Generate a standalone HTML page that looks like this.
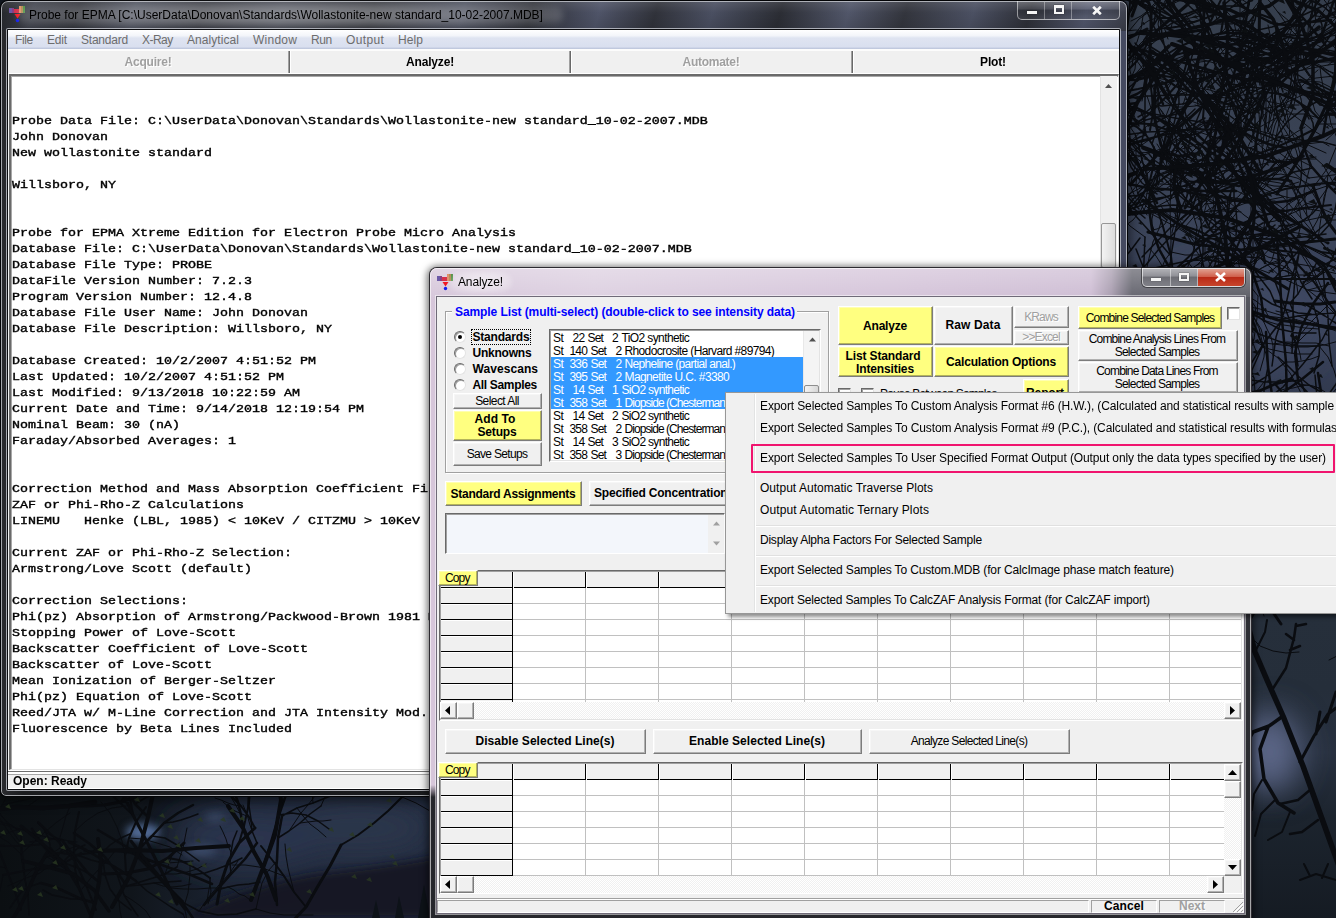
<!DOCTYPE html>
<html><head><meta charset="utf-8"><title>Probe for EPMA</title>
<style>
*{box-sizing:border-box;margin:0;padding:0}
html,body{width:1336px;height:918px;overflow:hidden}
body{position:relative;background:#141a24;font-family:"Liberation Sans",sans-serif;font-size:12px;color:#000}
.abs{position:absolute}
#bg{position:absolute;left:0;top:0}
.t{position:absolute;white-space:pre;line-height:1}
.seg{font-size:12px;line-height:14px}
.ms{font-size:12px;line-height:13px;margin-top:1px}
.msb{font-size:12px;line-height:13px;font-weight:bold;margin-top:1px}
.bb{font-size:12px;line-height:14px;font-weight:bold}
.mono{font-family:"Liberation Mono",monospace;font-weight:normal;-webkit-text-stroke:.45px #000;font-size:13.333px;line-height:18.182px;color:#000;white-space:pre;transform:scaleY(.88);transform-origin:0 0}
#main{position:absolute;left:1px;top:1px;width:1126px;height:795px;border-radius:7px 7px 5px 5px;background:linear-gradient(90deg,#2a2b2f 0,#1a1b1e 2%,#17181b 98.500%,#454a60 99.400%);box-shadow:0 0 0 1px #020305,0 2px 12px 3px rgba(0,0,0,.55);overflow:hidden}
#main .glass{position:absolute;left:0;top:0;width:100%;height:30px;background:linear-gradient(rgba(255,255,255,.10),rgba(255,255,255,0) 40%,rgba(0,0,0,.10)),linear-gradient(105deg,#232529 0,#3c3f49 3%,#2a2c33 7%,#454956 12%,#2c2e36 18%,#3e414c 25%,#2a2c33 33%,#444857 41%,#2c2e35 47%,#4f5468 53%,#30323a 58%,#4a4f61 63%,#2b2d34 69%,#515669 75%,#33353d 80%,#4b5062 86%,#2d2f37 91%,#50556a 96%,#3a3d48 100%)}
#main .edge{position:absolute;left:0;top:0;right:0;bottom:0;border:1px solid rgba(205,208,214,.75);border-radius:7px 7px 5px 5px}
.capbtns{border:1px solid rgba(255,255,255,.5);border-top:none;border-radius:0 0 5px 5px;background:linear-gradient(rgba(255,255,255,.22),rgba(255,255,255,.08) 45%,rgba(0,0,0,.12) 50%,rgba(255,255,255,.06))}
#dlg{position:absolute;left:430px;top:268px;width:821px;height:660px;border-radius:7px 7px 0 0;box-shadow:0 0 0 1px #2c2a30,0 1px 7px 3px rgba(0,0,0,.55);overflow:hidden;
 background:linear-gradient(rgba(40,40,46,0) 0,rgba(40,40,46,0) 517px,#26272c 529px),linear-gradient(90deg,#d6c6da 0,#dccfe0 20%,#d3c2d8 60%,#cdbcd3 80.500%,#a79bae 83%,#62626c 85.500%,#5a5b64 100%)}
#dlg .dglass{position:absolute;left:0;top:0;width:100%;height:29px;background:linear-gradient(rgba(255,255,255,.28),rgba(255,255,255,.04))}
#dlg .dedge{position:absolute;left:0;top:0;right:0;bottom:-4px;border:1px solid rgba(255,255,255,.6);border-radius:7px 7px 0 0}
#dlg .dright{position:absolute;right:0;top:29px;width:8px;height:640px;background:linear-gradient(#55565f 0,#3a3b42 80px,#2e2f35 300px,#232428 600px)}
.dcap{border:1px solid rgba(255,255,255,.6);border-top:none;border-radius:0 0 5px 5px;background:linear-gradient(rgba(255,255,255,.35),rgba(255,255,255,.12) 45%,rgba(0,0,0,.15) 50%,rgba(255,255,255,.08));box-shadow:0 0 0 1px rgba(0,0,0,.45)}
.dclose{border-radius:0 0 4px 0;background:linear-gradient(#e0a090 0,#d0604c 45%,#b82a16 50%,#c8452c 100%)}
.radio{width:12px;height:12px;border-radius:6px;background:#fff;border:1px solid;border-color:#696969 #e3e3e3 #e3e3e3 #696969;box-shadow:inset 1px 1px 0 #a0a0a0}
</style></head>
<body>
<svg id="bg" width="1336" height="918" viewBox="0 0 1336 918"><defs><linearGradient id="gr" x1="0" y1="0" x2="0" y2="1"><stop offset="0" stop-color="#353e4c"/><stop offset=".15" stop-color="#394254"/><stop offset=".33" stop-color="#3c455d"/><stop offset=".46" stop-color="#30384c"/><stop offset=".58" stop-color="#2a3244"/><stop offset=".67" stop-color="#262f3b"/><stop offset=".75" stop-color="#252e3a"/><stop offset=".82" stop-color="#283140"/><stop offset=".89" stop-color="#1c242e"/><stop offset="1" stop-color="#151b23"/></linearGradient><linearGradient id="gb" x1="0" y1="0" x2="1" y2="0"><stop offset="0" stop-color="#0b0f12"/><stop offset=".3" stop-color="#10151b"/><stop offset=".5" stop-color="#1b2331"/><stop offset=".75" stop-color="#222b3e"/><stop offset="1" stop-color="#232c40"/></linearGradient><filter id="bl" x="-50%" y="-50%" width="200%" height="200%"><feGaussianBlur stdDeviation="16"/></filter><filter id="bs" x="-50%" y="-50%" width="200%" height="200%"><feGaussianBlur stdDeviation="4"/></filter></defs><rect width="1336" height="918" fill="#141a24"/><rect x="1100" y="0" width="236" height="918" fill="url(#gr)"/><rect x="0" y="790" width="440" height="128" fill="url(#gb)"/><g filter="url(#bl)"><ellipse cx="1270" cy="752" rx="30" ry="40" fill="#5f6a8c" opacity=".95"/><ellipse cx="1235" cy="320" rx="95" ry="60" fill="#3f4865" opacity=".7"/><ellipse cx="250" cy="838" rx="80" ry="30" fill="#2b3650" opacity=".95"/><ellipse cx="360" cy="828" rx="75" ry="26" fill="#2c364e" opacity=".9"/></g><g filter="url(#bs)"><ellipse cx="143" cy="832" rx="17" ry="8" fill="#5f7cae" opacity=".85"/><ellipse cx="200" cy="851" rx="16" ry="5" fill="#4e6288" opacity=".6"/><ellipse cx="215" cy="817" rx="10" ry="4" fill="#4e6288" opacity=".5"/></g><path d="M180 918Q260 880 330 872T440 856L440 918z" fill="#121821" opacity=".9" filter="url(#bs)"/><path d="M418 918l6 -34l6 34zM395 918l4 -22l5 22zM372 918l4 -18l4 18z" fill="#0d1218"/><path d="M1320 67l8 4l9 3l10 1l9 1M1320 67l1 9l2 10l3 9l3 9M1326 104l3 10l2 10l4 9l4 10M1294 72l9 -2l7 -4l7 -6l5 -7M1265 97l11 17l14 16l16 14l20 9M1306 144l17 -2l16 4l14 8l13 10M1276 114l5 16l6 16l7 14l11 13M1290 130l7 13l4 14l1 14l-2 14M1259 128l-26 6l-25 7l-26 8l-25 6M1233 134l-11 12l-13 11l-16 7l-15 7M1233 134l-20 4l-17 10l-15 15l-10 18M1208 141l0 19l3 18l5 17l10 16M1265 97l-19 8l-21 2l-20 -1l-20 -7M1246 105l-12 4l-13 1l-13 -1l-13 -4M1225 107l-6 16l-4 16l-1 17l2 17M1219 183l13 -25l10 -27l9 -28l6 -28M1242 131l-7 -17l-7 -17l-7 -17l-7 -17M1228 97l-9 -4l-9 -3l-10 -2l-10 -1M1235 114l5 -9l7 -6l8 -5l9 -2M1214 63l-10 -3l-10 0l-10 0l-11 1M1257 75l15 -18l13 -21l13 -19l10 -22M1298 17l-10 -18l-8 -18l-3 -20l-1 -20M1308 -5l-5 -15l-9 -12l-13 -9l-14 -4M1250 -128l19 -7l21 -3l20 -4l20 -3M1250 -128l14 -8l14 -8l13 -9l14 -8M1314 -112l0 -21l1 -21l6 -20l10 -19M1301 -89l14 2l14 3l14 3l14 3M1193 -20l4 -16l7 -14l7 -16l6 -15M1193 -20l-12 -16l-8 -18l-6 -18l-3 -20M1250 148l9 -4l10 -3l9 -3l10 -3M1250 148l4 13l6 13l7 11l11 9M1200 150l-9 16l-12 14l-15 10l-18 4M1208 171l2 13l3 12l1 13l1 13M1208 171l0 12l-1 11l-1 12l-3 11M1203 7l-8 -16l-11 -14l-14 -13l-15 -9M1170 -36l-11 -1l-11 -2l-11 -5l-10 -5M1184 -23l-9 -8l-10 -7l-10 -6l-11 -5M1155 -45l-2 -12l-1 -13l0 -12l0 -13M1203 7l-12 -13l-15 -12l-14 -11l-16 -7M1191 -6l-10 6l-11 5l-10 5l-11 6M1176 -18l-8 13l-7 14l-3 15l3 15M1279 121l6 9l6 10l5 10l3 11M1275 104l13 7l12 9l11 9l13 8M1277 69l-4 8l-3 9l-3 8l-4 8M1223 59l-8 0l-7 2l-8 1l-7 3M1209 40l-7 -6l-6 -6l-5 -6l-5 -7M1223 59l-6 0l-6 0l-6 -1l-6 -1M1144 -64l-9 -8l-10 -5l-12 -2l-12 2M1144 -64l-9 -10l-11 -9l-10 -9l-13 -5M1150 -150l-13 -8l-15 -5l-16 -1l-15 4M1150 -150l-11 -6l-9 -8l-6 -12l-1 -12M1156 -128l8 -13l11 -11l13 -9l13 -8M1216 123l-4 -13l-5 -12l-5 -12l-3 -13M1207 98l-7 -1l-8 -2l-7 -1l-7 -1M1202 86l0 -7l-2 -7l-3 -6l-5 -6M1208 135l8 -5l6 -8l4 -9l3 -10M1216 130l1 -7l1 -6l1 -6l1 -7M1226 113l-4 -4l-5 -2l-6 -1l-6 0M1229 103l9 -2l8 -2l8 -1l8 0M1296 46l24 -11l24 -12l22 -13l24 -11M1320 35l11 9l10 10l10 10l9 11M1366 10l20 8l21 1l21 -2l20 -9M1281 75l16 -4l15 -3l16 -3l16 -2M1297 71l1 -8l1 -9l-3 -8l-5 -6M1328 65l7 -5l7 -4l8 -3l8 -2M1296 46l11 -11l9 -13l10 -14l6 -15M1316 22l-2 -13l-4 -11l-5 -12l-6 -11M1307 35l12 -5l12 -7l9 -9l6 -12M1095 209l-9 -3l-9 -1l-9 0l-9 0M1131 196l-7 -3l-8 -2l-7 1l-7 4M1119 200l-5 7l-6 7l-6 6l-7 5M1145 166l2 6l1 7l0 6l-1 7M1124 184l2 7l4 5l5 6l6 3M1167 220l-2 4l-4 3l-4 2l-5 1M1154 208l-1 6l-1 5l0 5l2 6M1271 48l1 17l-2 17l-4 16l-8 14M1270 82l2 10l1 11l-1 10l-3 11M1266 98l0 12l-1 12l-1 12l-1 12M1216 37l9 20l10 20l10 19l9 20M1245 96l13 3l13 3l14 3l14 0M1235 77l-2 14l-2 14l-3 14l-2 14M1216 37l18 -1l19 3l18 3l19 2M1234 36l6 -9l7 -10l7 -9l7 -9M1290 44l14 -3l14 -1l13 2l14 4M1176 -49l-5 -10l-6 -10l-6 -10l-4 -11M1165 -35l15 0l13 -3l14 -4l13 -5M1176 -49l10 5l9 8l7 8l4 11M1104 -110l-14 -1l-12 -5l-13 -6l-11 -7M1130 -84l-13 -5l-12 -4l-12 -5l-12 -6M1104 -110l-13 -1l-13 -2l-13 -2l-13 -1M1190 204l18 -11l19 -8l21 -5l21 1M1248 180l13 8l14 6l15 4l15 -1M1227 185l18 -3l17 -2l18 3l16 7M1190 204l7 23l-3 24l-9 23l-11 22M1185 274l-11 13l-11 15l-7 16l-4 17M1185 274l8 11l9 9l10 8l11 7M1287 122l6 -13l3 -13l1 -14l-4 -13M1296 96l-8 -5l-8 -4l-10 -1l-9 0M1296 96l-7 -8l-9 -7l-10 -5l-10 -4M1296 96l-7 -6l-6 -6l-8 -6l-7 -6M1276 137l3 -14l5 -14l6 -13l7 -13M1290 96l8 -6l7 -7l6 -7l7 -6M1297 83l11 -2l12 1l10 5l8 8M1276 137l10 2l10 2l11 0l10 0M1286 139l5 -3l4 -3l5 -3l5 -3M1307 141l5 -1l6 1l6 2l5 3M1248 129l-6 11l-5 12l-3 13l-2 13M1237 152l3 7l5 5l5 5l6 4M1232 178l-9 6l-10 5l-11 3l-10 4M1211 128l-9 4l-10 3l-10 0l-10 -2M1182 135l-5 -6l-5 -6l-6 -6l-5 -7M1202 132l-7 5l-7 5l-6 5l-6 6M1192 135l-5 -6l-3 -7l-2 -8l1 -7M1023 82l-8 -5l-7 -7l-6 -7l-5 -8M1073 70l-9 7l-10 6l-10 4l-11 3M1056 74l-5 12l-3 14l0 13l4 13M1142 59l2 10l1 11l-1 10l-2 11M1134 50l2 9l-1 10l-4 9l-5 8M1163 72l2 6l2 7l1 7l0 7M1255 20l-9 2l-9 1l-9 0l-9 -2M1237 23l-5 1l-5 0l-5 0l-6 0M1237 23l-4 -4l-4 -5l-4 -4l-5 -3M1249 35l-7 2l-8 3l-7 4l-6 4M1227 44l-1 4l-3 3l-3 3l-4 2M1221 48l-5 -4l-4 -4l-5 -4l-4 -4M1171 56l-13 -2l-13 0l-13 0l-13 0M1158 54l-7 4l-6 5l-6 7l-5 6M1119 54l-9 -4l-9 -1l-10 2l-8 4M1157 62l-7 7l-9 6l-9 3l-10 0M1132 78l-2 -7l-1 -7l1 -8l1 -7M1132 78l-7 -1l-7 -1l-8 1l-6 3M1166 -6l-7 8l-9 7l-9 7l-10 5M1123 -7l-6 5l-7 4l-7 3l-8 1M1166 -6l-4 -7l-2 -8l0 -8l1 -7M1109 -11l-2 10l-2 11l-2 10l-2 11M1109 -11l-5 -10l-6 -10l-4 -10l-3 -11M1149 -29l11 2l11 4l9 5l7 9M1151 -57l-3 -10l0 -10l0 -10l1 -10M1242 132l11 8l11 9l11 10l9 11M1194 164l11 2l11 6l9 7l7 9M1194 164l13 -1l13 3l12 6l10 9M1169 127l15 3l15 2l15 5l15 4M1169 127l-3 10l0 10l0 10l1 10M1237 254l2 11l2 11l4 10l7 9M1210 229l10 1l11 1l11 1l10 1M1202 212l9 -1l10 0l10 0l10 1M1152 7l-18 -7l-17 -9l-17 -10l-18 -8M1117 -9l0 -15l3 -14l5 -14l8 -12M1117 -9l0 -12l4 -12l6 -10l8 -9M1076 2l-14 -8l-14 -7l-16 -4l-16 0M1062 -6l-6 11l-8 10l-9 8l-10 8M1048 -13l-9 -8l-11 -6l-12 -2l-12 0M1152 7l-13 -11l-11 -14l-13 -11l-13 -11M1115 -29l-10 0l-10 -2l-10 -3l-9 -5M1115 -29l-14 0l-14 -6l-10 -10l-8 -12M1115 -29l0 -9l-3 -8l-2 -8l-5 -8M1297 138l-7 15l-7 14l-11 11l-12 11M1279 146l-10 -14l-7 -15l-2 -17l4 -16M1216 119l-12 4l-10 6l-10 7l-11 6M1273 162l-1 -13l0 -12l3 -12l5 -12M1305 92l-15 -13l-11 -16l-7 -19l-4 -19M1305 92l-19 -6l-19 -6l-19 -1l-20 0M1240 52l8 -18l6 -18l8 -18l6 -18M1373 165l4 21l7 21l11 18l13 17M1408 242l-1 11l-1 11l-2 11l-2 11M1384 207l-7 12l-6 13l-4 13l-5 13M1395 225l12 5l13 5l12 5l12 3M1373 165l-2 26l-3 26l-5 26l-8 25M1363 243l-13 11l-13 11l-15 9l-15 8M1363 243l7 19l3 20l0 20l-3 20M1174 170l2 9l4 9l4 8l5 7M1160 175l-1 8l-3 8l-5 7l-6 6M1138 193l3 7l5 6l5 5l7 4M1188 184l-6 -3l-5 -3l-5 -3l-5 -3M1196 181l-5 3l-5 2l-6 1l-5 -1M1188 184l-2 4l-3 4l-4 2l-4 2M1177 177l-5 -8l-5 -8l-5 -9l-5 -8M1177 177l-8 4l-8 5l-7 5l-6 7M1177 177l-6 -6l-6 -6l-4 -7l-5 -7M1487 24l-7 -21l-9 -19l-16 -15l-18 -10M1466 46l-5 -19l0 -19l3 -19l5 -18M1534 -16l22 9l19 14l15 18l12 20M1475 72l2 14l1 14l0 14l1 14M1475 72l6 17l4 19l-1 18l-4 18M1343 79l18 -6l17 -7l13 -13l12 -15M1351 101l16 10l14 13l11 15l6 18M1343 79l7 16l8 14l9 14l8 14M1308 -16l6 -3l6 -3l5 -5l5 -5M1318 -14l6 0l5 1l5 1l5 2M1318 -14l5 -7l2 -8l0 -9l-2 -8M1248 -36l-7 -6l-7 -6l-6 -7l-5 -7M1271 -29l-5 -7l-8 -6l-8 -3l-9 0M1274 -48l-6 -2l-6 -3l-4 -4l-4 -6M1243 -57l-7 1l-7 -1l-6 0l-7 -1M1196 -16l-14 6l-15 6l-13 8l-11 12M1143 16l-2 13l-4 13l-7 12l-9 9M1182 -10l-11 2l-11 1l-10 2l-11 2M1196 -16l-21 2l-21 -4l-20 -8l-17 -12M1134 -26l-9 8l-7 10l-7 10l-5 12M1154 -18l-12 -4l-12 -1l-12 1l-12 1M1154 -18l-4 -14l-5 -13l-5 -13l-6 -13M1170 -31l2 -18l3 -17l2 -18l4 -17M1177 -84l-7 -10l-10 -9l-11 -7l-13 -2M1172 -49l9 -3l8 -5l6 -6l4 -9M1150 31l0 8l0 7l1 8l2 7M1144 40l-5 5l-4 7l-2 7l-1 7M1144 40l-1 6l0 6l0 5l0 6M1175 16l-2 4l-1 4l-1 4l-2 3M1175 16l4 0l4 1l4 2l3 2M1111 103l-11 -18l-8 -19l-7 -20l-7 -21M1100 85l-10 -4l-9 -6l-7 -9l-5 -9M1100 85l-16 -7l-18 -2l-17 1l-18 4M1092 66l-10 -8l-10 -9l-8 -10l-6 -11M1207 123l-20 13l-21 11l-22 8l-23 7M1144 155l-14 -7l-14 -5l-16 -1l-15 0M1144 155l-19 1l-18 3l-16 9l-12 14M1144 155l-7 15l-1 15l3 16l8 14M1341 95l21 2l21 6l19 10l15 16M1402 113l3 16l-1 16l-4 15l-3 16M1362 97l17 -1l17 1l17 2l16 8M1417 129l14 6l14 8l14 6l13 8M1319 124l26 0l25 -4l26 -2l26 -5M1345 124l14 10l9 14l5 16l0 17M1370 120l10 -19l7 -19l3 -21l-3 -21M1118 -62l9 -22l13 -21l16 -19l18 -16M1156 -124l-5 -12l-5 -12l-3 -12l-5 -12M1174 -140l12 9l9 11l7 14l2 14M1118 -62l-3 -27l-10 -26l-12 -25l-17 -22M1093 -140l7 -17l10 -16l12 -14l11 -15M1115 -89l-19 -10l-19 -11l-20 -9l-20 -6M1128 -30l-13 -17l-11 -18l-7 -21l-1 -21M1115 -47l13 -9l11 -12l6 -15l5 -15M1097 -86l9 -12l5 -15l5 -14l1 -16M1316 -7l8 0l7 3l5 5l5 6M1316 -7l3 -9l4 -9l6 -9l6 -8M1292 49l7 -1l8 -2l7 -2l7 -2M1292 49l4 7l3 7l5 6l5 7M1327 16l9 -2l8 -3l9 -4l8 -3M1327 16l8 2l9 1l8 -1l9 -1M1355 -2l-1 -9l-1 -10l-2 -9l-2 -9M1247 79l-9 7l-9 5l-9 7l-8 8M1287 62l-7 10l-8 7l-9 8l-10 5M1313 104l2 7l5 6l5 6l6 4M1298 80l9 0l9 -2l9 -1l10 -1M1193 53l-7 5l-7 6l-4 7l-2 8M1186 58l-4 4l-3 4l-5 4l-4 3M1175 71l-1 5l-2 6l-3 5l-3 4M1188 69l7 10l8 9l8 8l11 6M1203 88l1 7l3 7l4 6l5 6M1211 96l5 5l6 3l6 0l7 -1M1195 79l7 -1l8 -1l8 -1l8 0M1368 -20l2 8l3 7l5 6l5 6M1347 -24l1 6l0 6l-1 6l-2 5M1340 -65l8 -1l8 -1l8 0l8 0M1336 -50l11 1l10 3l9 6l9 7M1336 -50l8 -1l8 1l8 3l6 4M1306 -44l-5 8l-5 8l-7 7l-6 7M1294 -43l-3 8l-2 8l-3 8l-4 7M1165 17l-9 1l-8 3l-7 5l-5 7M1153 10l-7 4l-7 5l-5 6l-5 6M1137 61l5 7l7 7l8 4l8 4M1129 69l-7 3l-6 5l-5 5l-5 5M1143 52l3 7l4 6l2 7l3 6M1190 -82l-8 9l-6 11l-6 11l-4 12M1190 -82l-12 6l-13 1l-14 -1l-12 -6M1194 -8l-9 -10l-8 -12l-5 -13l-4 -13M1215 -15l-18 -2l-18 -4l-17 -4l-17 -6M1253 49l-2 17l-3 17l0 17l3 17M1277 31l-3 25l2 24l5 24l7 24M1101 -55l-13 11l-13 11l-12 11l-11 13M1143 -49l-5 10l-1 12l0 12l2 11M1143 -49l-17 -4l-17 -4l-17 -2l-18 0M1158 -112l14 -12l13 -13l12 -14l10 -16M1150 -91l14 4l13 4l14 4l14 3M1148 -69l15 -9l14 -10l15 -9l15 -10M1299 33l-10 2l-11 1l-11 -1l-11 -1M1292 46l-8 7l-8 8l-7 8l-7 8M1299 33l1 10l-1 11l-3 11l-2 10M1293 38l-7 7l-8 3l-9 2l-9 -2M1308 39l0 -9l1 -9l3 -9l5 -8M1307 -54l-5 -2l-5 -2l-5 -3l-5 -1M1305 -45l-4 -6l-4 -6l-3 -6l-2 -7M1314 -3l-1 4l-1 5l0 5l0 5M1299 9l-2 7l-1 7l1 7l1 8M1299 9l-6 -4l-5 -6l-4 -6l-1 -7M1316 16l8 1l8 -2l6 -4l5 -7M1317 -3l-2 8l-2 7l-2 7l-1 7M1315 7l-4 7l-1 7l0 8l2 8M1203 118l1 6l3 6l3 5l5 5M1220 151l5 4l5 6l4 6l1 7M1184 144l1 6l-1 6l-2 6l-2 5M1180 136l6 0l6 -1l5 -1l5 -3M1180 136l6 0l5 -1l5 -1l5 -2M1176 74l-7 -3l-7 -3l-6 -6l-4 -6M1188 91l-8 4l-7 6l-4 7l-3 8M1026 145l0 -7l-2 -7l-1 -7l-3 -7M1015 139l2 -8l1 -8l0 -9l-1 -8M1015 139l-11 1l-11 0l-11 -1l-10 -1M983 132l-11 6l-12 5l-13 1l-13 -1M1002 130l-13 9l-15 5l-15 4l-16 -2M1336 114l22 8l24 3l24 1l24 -1M1406 126l12 4l12 3l12 0l13 -3M1358 122l11 -10l13 -7l12 -7l15 -4M1430 125l15 -1l16 2l13 8l11 12M1408 194l21 8l21 11l16 16l14 18M1450 213l5 17l6 16l11 14l11 14M1480 247l4 18l8 18l7 17l8 17M1255 128l-5 -2l-5 -3l-5 -3l-4 -4M1255 128l-5 -1l-5 -3l-4 -4l-2 -5M1290 156l7 3l6 3l6 3l5 5M1301 172l0 8l-2 8l-3 8l-6 6M1309 178l8 -1l8 -1l8 -1l8 -1M1116 10l-8 -6l-9 -6l-10 -4l-9 -6M1090 9l-8 -6l-10 -5l-9 -5l-10 -5M1090 9l-6 -3l-5 -4l-6 -5l-4 -5M1145 -15l-2 -8l-3 -8l-2 -8l-2 -9M1145 -15l10 -1l8 -5l9 -5l7 -6M1137 0l11 7l9 9l7 11l4 12M1143 -70l-3 -13l0 -13l2 -13l5 -13M1139 -39l6 -11l4 -13l-1 -12l-3 -13M1041 198l-1 14l4 13l6 12l10 9M1041 198l-15 -4l-15 -6l-13 -9l-11 -12M1177 174l1 15l-1 15l-2 15l-3 14M1139 153l15 -1l16 1l14 5l14 5M1149 184l-3 14l-5 12l-8 10l-11 8M1120 142l13 13l13 11l16 9l16 8M1149 184l13 0l13 1l13 2l13 2M1241 27l-1 -7l0 -8l0 -7l1 -7M1249 4l-8 -5l-7 -5l-9 -4l-9 -3M1241 27l-5 -6l-7 -4l-8 -2l-8 0M1218 52l-6 -2l-5 -1l-5 -3l-5 -3M1205 67l-7 2l-7 3l-6 3l-7 3M1205 67l-1 8l-1 8l-5 7l-5 6M1207 219l16 -10l16 -13l12 -15l7 -18M1251 181l-9 -12l-10 -11l-11 -9l-13 -7M1251 181l15 -5l15 -2l16 4l14 7M1234 241l19 -4l19 -4l19 -1l18 3M1309 235l8 -14l6 -14l3 -16l2 -16M1253 237l0 11l-2 12l-4 11l-5 9M1272 233l8 -7l7 -8l7 -9l6 -10M1234 241l-3 24l-2 24l0 24l-2 24M1231 265l11 14l8 16l3 18l0 18M1229 313l-8 10l-8 11l-9 10l-8 10M1229 289l-14 10l-13 11l-15 9l-13 11M952 -60l5 -18l7 -18l9 -17l13 -13M1009 -8l0 -18l-1 -18l-2 -18l-5 -17M991 -26l-8 -18l-5 -20l-2 -21l-2 -20M1042 71l-10 16l-7 18l-3 20l-3 19M1035 97l19 12l16 15l16 16l14 17M1037 124l-18 13l-11 19l-5 21l-2 22M1312 1l-7 -6l-9 -6l-9 -5l-10 -3M1334 16l-4 -8l-5 -7l-6 -6l-7 -5M1343 25l-7 -8l-8 -7l-9 -7l-8 -6M1386 17l7 4l7 6l5 7l2 9M1422 -9l7 -8l5 -8l3 -10l1 -10M1413 3l13 0l12 0l12 2l12 5M1173 -60l11 2l11 -3l10 -5l10 -6M1200 -72l9 4l8 4l9 4l10 2M1224 -45l6 9l4 9l4 10l5 10M1168 -43l8 10l8 10l4 12l3 13M1224 -45l11 -9l12 -8l12 -8l14 -4M1122 146l-11 -21l-5 -22l3 -24l6 -22M1109 79l-6 -11l-7 -10l-8 -9l-10 -7M1109 79l-9 -9l-11 -7l-12 -5l-12 -5M1109 79l14 -12l15 -10l14 -13l14 -12M1149 140l-13 9l-10 12l-8 13l-7 15M1126 161l1 10l2 9l3 10l4 9M1136 149l0 8l-1 9l-2 8l-2 8M1272 95l-5 17l-2 18l3 17l9 15M1268 147l9 4l8 6l8 6l7 7M1267 112l-10 11l-11 8l-13 5l-14 3M1287 56l4 10l3 11l4 11l3 11M1298 88l-5 8l-3 9l-4 9l-3 9M1301 99l1 6l2 6l4 4l5 4M1272 95l-14 12l-10 14l-7 17l-3 18M1248 121l4 9l3 9l0 10l-1 9M1238 156l-13 4l-14 0l-14 0l-14 -4M1258 107l-12 5l-11 7l-9 10l-4 12M1163 -30l5 10l3 12l3 11l3 11M1146 -31l9 5l8 5l10 3l9 3M1146 -31l8 -4l7 -4l6 -5l6 -6M1133 -97l-1 -8l-2 -7l-2 -7l-3 -7M1126 -88l8 -5l6 -6l6 -7l3 -9M1121 -78l-1 -6l0 -7l0 -7l1 -7M1134 -69l6 -2l5 -4l5 -4l2 -6M1126 -63l8 2l7 2l8 2l7 1M1126 -63l0 -8l1 -7l1 -8l2 -7M1157 78l10 2l8 5l8 7l5 9M1184 121l-2 9l-2 10l-3 10l-3 9M1173 107l11 0l11 -1l10 -2l11 -3M1152 96l5 8l5 8l4 9l4 9M1150 80l3 8l6 8l7 6l8 5M1108 106l8 14l7 14l8 14l6 15M1122 67l4 14l2 16l4 14l6 14M1225 79l7 5l8 3l8 3l9 1M1220 59l-4 5l-2 6l-1 6l1 6M1256 56l10 -9l10 -9l10 -10l9 -10M1272 62l7 -8l6 -7l4 -9l3 -10M1256 56l5 9l2 10l1 10l-1 11M1147 96l5 15l5 16l6 14l8 15M1163 141l5 10l6 9l9 7l9 6M1171 156l3 9l6 8l7 6l8 6M1203 95l23 3l22 -4l22 -10l19 -12M1226 98l5 -14l10 -12l12 -10l13 -8M1270 84l10 11l6 14l3 15l1 15M1155 62l-16 -3l-16 -6l-15 -8l-11 -12M1139 59l-14 0l-14 -1l-14 -4l-13 -3M1097 33l-13 2l-14 1l-13 2l-13 1M1108 45l3 -9l5 -8l6 -7l7 -6M1201 37l-2 17l-5 16l-8 15l-11 13M1194 70l-11 5l-10 6l-10 8l-8 9M1199 54l-4 13l-3 13l-5 12l-4 13M1199 54l-13 1l-13 5l-11 7l-10 9M1201 37l1 14l3 13l4 13l6 13M1202 51l8 3l9 0l9 -1l8 -3M1205 64l1 9l2 8l3 9l5 7M1205 64l-4 10l-3 11l-1 10l1 11M1332 91l17 5l14 10l10 13l8 15M1373 119l10 5l9 6l9 6l9 7M1373 119l-5 8l-4 8l-4 8l-6 8M1332 91l11 7l9 9l6 11l5 12M1352 107l-5 10l-6 8l-7 8l-8 7M1358 118l-1 11l1 10l2 11l4 9M1086 189l-12 5l-10 7l-8 10l-6 10M1086 189l6 9l4 10l5 9l6 10M1103 141l-9 13l-4 15l1 15l2 15M1125 135l-12 -15l-10 -16l-12 -14l-14 -13M1093 155l-12 5l-13 5l-13 4l-13 3M1061 150l0 -9l3 -8l4 -8l5 -6M1061 150l-10 8l-10 6l-12 6l-12 2M1350 17l20 -4l20 -4l21 -2l21 0M1370 13l9 6l9 5l10 4l10 2M1370 13l4 11l3 12l2 12l3 11M1411 7l6 12l4 13l1 14l-1 14M1350 17l8 -22l3 -23l-5 -23l-7 -23M1358 -5l-19 -2l-19 0l-19 1l-19 0M1361 -28l-20 -3l-19 2l-19 5l-17 10M1349 -74l-18 -2l-18 1l-17 5l-15 10M1224 137l3 -4l3 -4l3 -4l4 -4M1225 127l-3 -4l-2 -5l-2 -6l0 -6M1216 120l-5 0l-5 1l-4 1l-4 3M1205 107l-1 -4l-1 -4l0 -4l-1 -4M1175 -7l-5 -9l-7 -8l-8 -6l-10 -3M1200 16l-10 2l-9 3l-9 0l-10 0M1089 34l-14 0l-13 -3l-12 -5l-9 -9M1147 31l-11 -1l-11 1l-11 3l-9 6M1127 36l-5 9l-4 10l-3 10l-1 11M1217 19l10 1l9 4l8 6l8 7M1244 30l2 5l3 6l4 4l4 4M1227 20l6 -2l6 -4l6 -4l4 -6M1227 20l-2 9l-6 6l-6 6l-7 4M1232 7l10 -2l10 -4l8 -7l6 -9M1242 5l7 -4l7 -3l6 -3l6 -5M1252 1l-5 -7l-6 -6l-8 -4l-8 -2M1217 19l-4 -12l-8 -10l-9 -9l-11 -6M1185 -18l-6 -6l-6 -5l-6 -6l-7 -4M1213 7l-3 -10l0 -11l4 -10l5 -9M1185 -18l-8 5l-6 7l-4 7l-4 8M1428 158l-2 11l-1 12l-1 11l-3 11M1428 158l16 6l16 0l16 -5l14 -9M1417 139l10 5l10 7l9 8l7 9M1354 127l7 12l9 11l10 10l12 7M1354 127l12 13l15 12l17 6l18 4M1097 103l-6 0l-5 -1l-6 -1l-5 -2M1095 94l2 -6l1 -7l1 -7l1 -7M1095 126l2 6l3 4l4 3l4 3M1084 136l-5 0l-5 -1l-5 -2l-3 -4M1095 126l1 6l1 6l0 6l0 6M1039 99l-1 -17l-2 -16l-5 -15l-10 -13M971 50l-19 -7l-16 -11l-15 -12l-13 -15M1014 85l-16 -8l-16 -10l-15 -9l-17 -8M1001 79l-10 -8l-9 -9l-8 -11l-9 -9M990 59l10 -10l13 -5l14 -3l14 0M1309 -71l6 12l6 12l4 13l0 13M1292 -59l9 -10l8 -10l7 -12l2 -14M1243 -81l-16 -2l-16 -2l-17 0l-16 2M1209 -127l-10 -7l-9 -5l-11 -4l-11 -2M1216 -45l-12 -1l-11 1l-12 2l-11 4M1170 -39l-3 6l-3 6l-1 7l0 7M1193 -45l-4 7l-5 7l-5 6l-4 7M1181 -43l-2 8l-4 8l-3 8l-2 8M1225 -6l6 -13l8 -11l10 -10l12 -6M1261 -46l10 0l9 2l9 2l10 2M1249 -40l-1 -11l1 -12l1 -11l-1 -12M1261 -46l0 -7l1 -7l1 -7l0 -7M1291 225l-8 -6l-9 -4l-9 -2l-9 -2M1312 214l-7 6l-9 5l-9 4l-9 2M1328 266l-9 -5l-8 -5l-7 -6l-6 -8M1317 276l-12 -1l-12 0l-12 2l-12 2M1328 266l-5 6l-6 6l-7 4l-7 4M1319 -103l24 -2l23 5l22 10l19 15M1366 -100l18 -5l18 -7l14 -12l14 -13M1388 -90l2 14l0 14l1 14l-2 13M1343 -105l14 -5l15 -4l15 -3l15 -4M1297 -48l22 -7l22 -4l23 -2l22 -1M1364 -61l13 -12l14 -9l16 -6l17 -5M1341 -59l8 13l4 14l1 15l-1 15M1386 -62l17 -5l18 1l16 5l15 10M1296 -19l21 -13l22 -10l22 -8l25 -2M1361 -50l18 -3l18 2l18 4l16 8M1361 -50l15 -8l13 -11l14 -9l15 -7M1185 206l2 -9l0 -10l-2 -9l-5 -8M1161 206l4 6l5 4l7 3l6 1M1359 212l-7 5l-9 2l-8 1l-9 0M1384 147l-5 -8l-7 -7l-8 -5l-9 -4M1382 209l1 8l2 8l5 8l5 6M1497 271l9 15l5 16l2 17l-4 17M1497 271l8 -16l5 -17l4 -18l0 -18M1460 271l-1 -20l-8 -19l-12 -16l-18 -11M1438 286l1 -18l3 -18l4 -18l7 -16M1499 236l19 -5l15 -12l14 -13l11 -16M1440 284l18 -18l12 -20l11 -23l6 -23M1440 284l19 -7l18 -7l17 -7l18 -7M1480 207l17 -11l18 -9l19 -7l19 -7M1251 436l-14 10l-13 11l-9 14l-8 15M1251 436l-23 11l-24 6l-24 6l-24 6M1432 477l10 13l13 10l13 10l14 9M1390 467l6 12l6 12l7 12l7 12M1410 475l8 -8l10 -6l12 -2l11 1M1117 176l-7 0l-6 2l-7 3l-5 5M1124 193l-6 -1l-6 0l-5 0l-6 1M1095 145l0 -5l1 -5l3 -4l4 -4M1096 138l-6 -4l-5 -3l-5 -4l-5 -3M1096 138l-3 -5l-2 -4l-1 -5l0 -6M1072 185l-6 1l-6 2l-5 4l-5 5M1319 346l9 11l6 13l4 14l2 14M1278 341l15 6l15 0l16 -2l15 -4M1253 274l7 -5l8 -4l8 -2l9 -2M1268 265l4 -5l2 -7l0 -7l-2 -7M1276 263l7 3l6 4l6 4l5 5M1260 269l5 -3l6 -3l6 -2l6 -3M1255 260l-5 -6l-4 -7l-5 -6l-4 -6M1250 254l-5 2l-4 3l-4 3l-4 4M1241 241l0 -4l-2 -4l-2 -3l-4 -2M1210 431l-1 19l-3 18l-8 16l-10 15M1206 468l-9 -4l-9 -5l-9 -5l-8 -5M1206 468l-12 3l-12 0l-13 0l-12 -1M1109 217l-22 2l-23 -1l-23 -1l-23 -3M1087 219l-11 -5l-11 -5l-11 -4l-11 -4M1087 219l-5 -15l-2 -17l-1 -16l2 -16M1176 452l5 14l1 14l-2 15l-3 14M1196 412l7 -8l4 -10l3 -11l0 -10M1147 434l-8 4l-9 2l-9 3l-8 3M1140 464l-9 5l-7 7l-5 8l-4 9M1244 405l6 3l6 3l6 3l6 3M1252 430l-2 10l-5 9l-6 9l-7 7M1256 262l4 -22l11 -20l16 -15l19 -12M1306 193l18 -6l17 -6l18 -6l18 -4M1260 240l11 5l10 8l6 11l2 12M1218 360l8 5l10 4l9 4l11 1M1171 319l3 17l2 17l0 17l2 17M1171 319l7 17l7 17l7 17l9 16M1146 359l8 15l6 16l5 17l2 18M1095 280l-3 -9l-2 -9l2 -9l3 -9M1094 252l4 -10l3 -11l2 -11l0 -11M1093 266l-2 -8l2 -7l3 -7l5 -7M1099 261l-16 -22l-16 -20l-19 -19l-18 -20M1048 200l-16 -3l-16 -3l-16 -3l-16 -3M1117 137l-6 5l-4 6l-3 6l-2 7M1136 157l-11 3l-10 6l-8 7l-8 8M1135 134l-5 -7l-3 -8l0 -9l2 -9M1126 110l2 -8l1 -7l0 -8l-1 -8M1129 124l-10 -3l-11 0l-11 2l-11 4M1120 96l-11 -5l-10 -5l-9 -6l-11 -5M1252 199l-16 0l-15 3l-13 8l-13 9M1237 177l18 -11l20 -5l20 -2l21 0M1252 199l11 -17l15 -14l18 -8l20 -3M1263 154l-3 -27l-2 -27l-4 -27l-9 -26M1260 127l14 -8l14 -5l16 0l15 4M1254 73l-16 -7l-16 -8l-17 -4l-18 -2M1230 176l22 5l22 5l23 1l23 -2M1252 181l11 11l10 12l10 12l8 12M1320 185l11 -14l16 -9l17 -5l18 0M1210 368l-10 2l-8 3l-9 3l-9 4M1159 7l-7 -19l-3 -21l-3 -20l1 -21M1159 7l12 -7l10 -10l6 -13l4 -14M1115 397l-20 5l-20 1l-21 -2l-19 -8M1054 401l-11 -1l-10 1l-11 0l-11 -2M1043 400l-5 -3l-7 -3l-7 -1l-6 1M1043 400l-2 -6l-1 -6l-2 -7l-1 -6M1011 399l-7 -5l-6 -6l-7 -6l-6 -7M1440 409l15 29l20 26l23 23l24 22M1498 487l22 11l19 14l19 16l13 20M1522 509l21 -2l21 4l20 6l18 12M1375 364l30 -9l31 -5l32 2l31 5M1499 357l14 -12l16 -10l18 -4l19 1M1468 352l8 -18l2 -20l-4 -19l-9 -17M1098 294l7 -4l7 -4l8 -4l7 -5M1098 294l-3 -6l-4 -5l-5 -4l-5 -4M1108 277l-10 -7l-10 -6l-11 -4l-11 -6M1121 262l-4 -8l-5 -8l-5 -8l-6 -6M1131 250l-3 -7l-4 -8l-5 -6l-7 -6M1294 554l17 7l17 6l17 7l17 8M1216 539l-17 1l-16 -3l-16 -4l-16 -4M1185 227l20 -23l21 -22l17 -25l13 -27M1243 157l-1 -20l-5 -18l-6 -19l-6 -18M1231 100l6 -10l4 -11l4 -12l3 -11M1237 119l8 -8l6 -9l8 -7l8 -7M1237 119l14 -6l15 -5l15 -2l15 3M1205 204l24 -2l24 -4l23 -9l23 -7M1253 198l11 -10l9 -11l8 -13l7 -12M1229 202l15 13l17 12l18 9l20 4M1256 130l25 7l23 11l19 17l13 22M1281 137l21 3l21 2l20 6l19 9M1233 263l-5 4l-5 3l-5 3l-5 4M1232 264l-5 -1l-6 -1l-4 -3l-4 -4M1205 259l0 -6l0 -6l3 -6l3 -5M1232 264l-5 -3l-6 -2l-6 -1l-6 -1M1176 414l-5 26l-8 24l-11 24l-12 22M1140 510l7 16l8 16l7 15l5 17M1163 464l-17 12l-18 13l-16 14l-13 17M1176 414l-17 25l-24 18l-29 10l-30 1M1076 468l-16 -5l-16 -4l-17 -1l-16 5M1135 457l-20 10l-20 8l-21 7l-22 1M1159 439l-18 -6l-19 -6l-18 -4l-20 1M1148 437l-16 19l-18 17l-19 17l-21 14M1114 473l-12 -5l-10 -8l-9 -10l-6 -11M1074 504l-6 18l-8 18l-9 17l-13 15M1187 261l16 20l17 21l16 22l16 21M1203 281l23 2l22 0l22 -4l22 -4M1236 324l-4 13l0 13l0 13l3 14M1220 302l20 3l20 4l20 6l19 9M1260 258l22 20l26 12l29 4l29 -7M1308 290l14 11l12 12l10 15l8 16M1308 290l23 -6l19 -15l17 -17l13 -20M1337 294l14 17l15 17l13 18l12 19M1187 261l21 -1l21 2l21 4l19 7M1269 273l12 -10l10 -12l7 -15l4 -15M1208 260l5 10l7 9l6 9l8 8M1250 266l12 -9l10 -11l9 -13l3 -15M1117 281l-11 -14l-10 -14l-8 -16l-4 -17M1088 237l-12 -6l-13 -5l-14 -3l-13 0M1084 220l2 -13l-2 -13l-7 -11l-7 -11M1084 220l-12 -9l-13 -5l-15 0l-14 4M1173 456l23 5l22 4l23 6l22 5M1218 465l20 2l18 7l16 11l11 15M1241 486l-11 1l-11 -1l-12 -1l-11 -2M1264 382l-8 10l-6 11l-4 12l-4 12M1245 379l-8 -6l-10 -3l-10 -3l-11 -1M1245 379l-2 -15l0 -15l0 -15l0 -15M1346 433l2 14l-2 14l-5 13l-8 12M1227 226l13 5l13 4l13 4l14 1M1253 235l2 7l3 6l3 7l2 6M1240 231l5 -5l4 -6l2 -6l0 -7M1225 244l-12 7l-14 4l-14 0l-14 -3M1171 252l-6 8l-4 10l-1 10l1 10M1199 255l-6 -9l-5 -10l-6 -9l-6 -9M1227 262l8 11l7 12l7 12l7 11M1249 297l7 4l6 5l4 6l4 7M1242 285l-6 9l-8 7l-9 4l-10 2M1256 308l-3 12l-2 11l2 12l4 11M1189 393l-14 -32l-13 -32l-18 -31l-20 -28M1124 270l-22 -10l-24 -6l-24 -3l-24 6M1078 254l-6 12l-6 12l-7 11l-9 10M1078 254l-10 -12l-6 -14l-5 -15l-2 -16M1078 254l-12 14l-11 14l-11 14l-11 15M1263 515l17 8l15 11l10 15l4 18M1298 551l16 -2l16 -2l16 0l16 3M1278 535l2 15l2 15l1 15l2 15M1183 489l-9 -2l-8 -3l-7 -6l-5 -6M1183 489l2 10l4 10l4 10l5 9M1283 484l9 5l7 7l6 8l3 10M1258 463l8 3l8 2l9 -1l8 -3M1258 463l10 2l10 3l10 5l8 5M1119 196l-9 -6l-9 -6l-9 -4l-11 -1M1081 179l-2 5l-1 5l1 6l2 4M1101 184l-7 3l-6 4l-6 5l-6 5M1110 190l-6 -3l-7 -3l-7 -3l-6 -4M1104 188l-11 8l-9 9l-8 11l-6 12M1070 228l5 6l5 4l6 3l7 2M1148 467l9 6l11 4l10 4l11 2M1157 473l5 8l7 5l9 4l9 1M1157 480l2 12l1 13l-2 12l-4 12M1159 492l-8 4l-8 4l-6 7l-4 7M1154 529l2 8l3 8l5 6l8 4M1148 467l9 0l9 1l8 1l9 2M1183 471l5 -2l5 0l5 1l4 0M1157 467l6 4l5 5l4 7l2 7M1174 469l4 -5l3 -6l2 -6l0 -6M1260 528l-8 22l-1 23l6 22l7 21M1252 550l-8 8l-9 7l-9 7l-8 8M1260 528l-18 21l-19 20l-23 15l-24 13M1176 597l-16 -9l-17 -7l-17 -4l-18 -3M1176 597l-17 -8l-19 -3l-19 0l-17 8M1200 584l-6 21l-5 22l-5 22l-1 22M1260 528l-14 17l-6 20l-3 21l2 22M1246 545l10 6l9 7l9 8l9 8M1237 586l12 4l13 4l13 5l12 6M1318 321l-6 8l-7 6l-7 7l-7 6M1319 356l-8 3l-9 2l-9 1l-8 0M1114 400l-7 25l-3 26l-2 27l3 26M1105 504l18 2l18 2l18 -2l18 -4M1123 506l10 7l11 7l10 7l10 8M1141 508l9 -7l8 -8l7 -9l8 -7M1177 502l10 -4l10 -2l10 2l9 4M1102 478l-4 13l-4 14l-2 13l-2 14M1090 532l-6 5l-7 2l-7 0l-6 -2M1107 425l-8 12l-8 13l-5 13l-3 15M1099 437l-8 7l-5 9l-5 9l-1 10M1099 437l-5 7l-3 7l-3 8l-4 7M1083 478l6 9l3 11l1 12l-2 11M1335 259l-17 -20l-11 -23l-3 -25l6 -25M1307 216l-8 -14l-7 -14l-6 -15l-7 -14M1318 239l2 -14l2 -14l2 -14l5 -14M1335 259l-17 -21l-17 -20l-18 -21l-22 -15M1301 218l-3 -18l-6 -16l-10 -15l-12 -12M1283 197l-15 3l-15 1l-16 -1l-15 -4M1211 263l3 -11l2 -11l0 -11l-1 -11M1215 219l-3 -6l-3 -6l-3 -6l-5 -5M1214 252l7 -1l7 2l5 4l5 5M1244 234l14 6l15 4l16 0l15 -1M1258 240l7 5l8 2l8 0l8 -1M1258 240l5 -7l4 -8l6 -7l5 -7M1263 223l12 -2l11 -5l11 -5l9 -8M1297 211l6 -2l6 0l6 1l6 1M1306 203l7 2l6 2l6 3l7 3M1286 216l1 -6l0 -7l0 -6l0 -7M1186 426l6 8l7 7l5 8l4 9M1182 413l5 8l4 8l4 8l4 9M1334 322l7 1l6 3l5 3l6 4M1291 336l4 5l3 6l2 7l1 6M1293 311l-4 1l-4 1l-5 -1l-4 -1M1317 262l-5 -6l-5 -7l-7 -6l-6 -5M1298 294l-1 -8l-2 -8l-4 -7l-5 -7M1144 210l32 17l31 19l29 22l22 28M1258 296l-1 22l-3 21l-7 21l-6 21M1254 339l-9 13l-5 15l-3 15l2 15M1247 360l-16 6l-15 8l-11 13l-7 16M1177 149l4 -10l8 -9l10 -5l11 -4M1187 163l-9 3l-8 4l-8 3l-9 4M1264 407l-15 5l-15 1l-15 0l-14 -4M1264 407l4 14l3 14l-4 14l-8 12M1334 455l18 1l18 1l18 -1l18 0M1377 435l13 4l11 6l10 8l10 10M1288 503l-15 -2l-15 0l-15 3l-15 4M1288 503l-14 -11l-13 -13l-9 -16l-6 -17M1145 237l-15 -11l-12 -13l-9 -16l-6 -17M1109 197l-12 -4l-10 -6l-9 -8l-6 -11M1118 213l7 -12l8 -11l9 -11l9 -9M1211 181l33 -20l24 -30l20 -33l13 -36M1301 62l-1 -23l0 -22l1 -23l5 -22M1300 39l-7 -17l0 -19l3 -18l6 -18M1300 39l-11 -11l-9 -13l-9 -12l-11 -12M1268 131l-7 -25l-6 -25l-4 -26l-6 -25M1255 81l-7 -14l-6 -15l-5 -15l-3 -15M1255 81l1 -15l-1 -15l0 -15l-3 -15M1255 81l19 -10l20 -6l21 -3l22 0M1268 131l2 -20l7 -20l12 -17l15 -14M1270 111l13 -7l13 -6l13 -6l13 -6M1304 60l-2 -14l-5 -13l-8 -12l-11 -9M1058 260l-8 -20l-1 -22l8 -21l11 -19M1050 240l13 -7l13 -8l11 -11l9 -12M1057 197l0 -11l-2 -11l-6 -10l-9 -7M1049 218l-1 -12l-4 -12l-6 -10l-7 -10M1089 276l-14 -17l-16 -16l-17 -13l-20 -11M1022 219l-9 -7l-11 -5l-12 -3l-12 -1M1042 230l-16 6l-16 4l-17 0l-16 -4M1075 259l-5 -12l-6 -12l-9 -10l-9 -9M1233 322l20 -6l22 1l22 3l21 5M1253 316l8 13l4 14l-1 14l-4 14M1253 316l6 12l3 13l4 13l2 12M1221 350l17 -5l18 -3l17 2l18 2M1256 342l13 7l14 3l15 2l14 0M1291 346l9 -11l9 -11l10 -10l10 -10M1273 344l14 -2l15 1l14 0l13 3M1233 292l12 -18l9 -18l8 -19l4 -21M1254 256l-4 -11l-5 -11l-6 -9l-8 -9M1266 216l-10 -12l-11 -9l-14 -7l-15 -3M1298 316l13 5l12 5l13 5l12 6M1338 313l8 8l6 9l6 9l4 11M1358 313l9 6l7 8l4 10l1 11M1263 320l4 9l4 8l2 9l0 10M1263 320l13 4l15 2l14 2l14 1M1349 329l1 -16l4 -16l7 -15l8 -14M1368 326l11 3l12 1l11 2l11 0M1226 516l10 2l10 -1l9 -3l8 -7M1226 516l6 -8l2 -9l0 -9l-3 -9M1130 532l-12 -5l-13 -6l-12 -6l-11 -7M1154 287l15 -6l14 -7l14 -9l11 -11M1169 281l-4 -8l-4 -9l-5 -8l-6 -7M1197 265l10 -5l8 -9l6 -11l5 -11M1211 250l7 -9l6 -11l7 -10l7 -9M1231 220l-5 -8l-6 -7l-8 -5l-9 -2M1191 261l4 -18l6 -17l10 -15l10 -15M1211 211l11 -1l11 -2l10 -4l10 -3M1221 196l14 2l13 3l14 0l13 0M1195 243l-8 -11l-7 -11l-7 -10l-7 -12M1190 353l-16 -9l-17 -8l-16 -10l-14 -12M1157 336l-2 -13l-1 -13l-3 -13l-3 -12M1157 336l1 -10l-1 -10l-3 -10l-5 -9M1162 314l7 -9l10 -8l11 -5l11 -5M1201 287l7 0l7 -3l5 -5l4 -5M1169 305l8 -1l8 -3l6 -6l3 -7M1190 292l6 7l7 7l6 7l6 8M1148 294l0 -13l-1 -14l3 -13l3 -12M1153 242l3 -7l3 -6l2 -7l-1 -7M1162 325l-13 -16l-13 -16l-15 -14l-14 -16M1136 293l-16 -7l-12 -12l-8 -15l-5 -16M1149 309l-13 1l-12 2l-12 3l-11 6M1420 145l9 -8l10 -7l10 -6l11 -5M1377 153l15 6l13 9l14 7l13 9M1175 169l-11 8l-10 11l-6 12l-5 13M1194 334l0 8l2 8l4 6l6 6M1200 356l6 2l7 2l6 1l6 2M1196 350l5 2l5 3l4 4l5 3M1207 334l-11 -1l-11 -1l-12 0l-11 1M1196 333l0 7l1 7l5 5l5 5M1264 239l22 -12l22 -7l24 -5l24 -3M1308 220l8 -16l10 -14l10 -14l12 -13M1332 215l13 -10l16 -6l17 -1l16 5M1295 238l8 15l9 14l7 15l6 15M1312 267l13 4l13 3l14 0l13 0M1295 238l14 10l15 8l16 5l17 4M1340 261l7 10l2 12l1 11l0 12M1299 384l7 1l7 1l6 2l6 4M1281 391l1 6l0 6l-1 6l-1 6M1280 409l-9 7l-8 6l-11 3l-10 3M1287 239l13 13l10 16l8 18l7 17M1263 197l15 8l13 10l12 12l11 12M1178 195l-20 11l-21 8l-23 4l-22 0M1177 226l21 13l20 15l19 16l14 21M1252 268l-8 15l-11 12l-11 12l-13 10M1218 241l0 14l1 14l5 13l8 11M1263 347l15 11l12 15l9 16l8 17M1229 269l12 11l8 14l3 15l2 16M1227 230l20 14l21 13l24 6l24 4M1295 209l17 -20l15 -20l10 -24l8 -24M1277 161l13 8l12 11l10 12l8 13M1258 184l5 -21l5 -20l5 -21l3 -20M1251 -85l13 -16l16 -12l17 -12l18 -10M1231 -21l-7 -24l-12 -22l-19 -16l-23 -11M1245 -52l14 -14l13 -15l13 -15l14 -15M1111 -78l-26 16l-24 19l-18 25l-16 26M1111 -78l-19 -23l-22 -21l-25 -17l-27 -13M1354 -21l14 -22l14 -24l12 -24l10 -24M1354 -21l21 -11l21 -10l23 -8l22 -7M1169 144l2 32l-1 33l1 32l-1 33M1152 182l-25 13l-24 16l-20 19l-16 23M1310 41l28 16l25 18l26 20l25 18M1310 41l21 -5l21 -3l21 -2l21 -4M1320 105l27 7l25 13l21 18l19 20M1256 62l21 -4l21 0l20 6l17 11M1137 108l-18 36l-10 38l-10 38l-7 40M1090 97l-16 -18l-20 -14l-22 -11l-22 -12M1090 97l-2 -32l1 -32l-2 -33l-1 -32M1197 -23l-38 -3l-37 6l-36 13l-34 17M1197 -23l24 -20l20 -24l24 -21l25 -18M1197 -69l-4 -29l3 -29l9 -28l18 -23M1072 134l-8 21l-12 19l-17 16l-17 15M1149 124l-20 19l-22 18l-24 16l-24 14M1072 134l-23 -7l-23 -6l-23 -7l-22 -8M1360 639l-7 7l-8 5l-8 5l-8 4M1319 435l7 10l6 10l3 12l3 11M1338 478l10 -1l8 -4l7 -7l5 -8M1241 425l-10 4l-10 7l-8 8l-8 8M1205 452l-5 -1l-6 -1l-5 -2l-6 -3M1205 452l3 8l5 8l7 4l9 2M1265 453l-11 -3l-13 -2l-12 2l-12 2M1241 448l-6 8l-7 7l-5 9l-5 9M1259 435l-1 -14l-2 -15l-1 -14l-1 -14M1254 378l-7 -7l-6 -7l-7 -5l-7 -5M1254 378l-4 -11l-3 -12l-2 -12l-1 -12M1233 431l-11 -17l-5 -19l-3 -20l4 -20M1218 355l7 -13l6 -14l5 -14l3 -15M1329 465l6 6l8 4l9 4l9 2M1315 465l7 6l9 5l8 5l9 3M1257 518l-9 -10l-7 -12l-5 -12l-3 -14M1241 496l5 -7l3 -7l2 -9l2 -8M1286 571l4 9l-1 10l-2 10l-6 8M1270 566l8 -6l9 -4l10 -2l9 1M1253 600l-8 11l-7 11l-7 10l-8 11M1251 637l9 9l13 5l13 2l13 -1M1293 438l16 5l15 5l16 4l17 2M1340 452l10 -3l9 -3l10 0l9 0M1285 499l8 -10l7 -11l4 -11l5 -12M1293 489l1 -10l4 -10l4 -10l4 -9M1405 456l3 6l1 6l-1 6l-3 6M1456 406l4 7l5 7l5 7l4 8M1410 414l7 3l8 3l8 3l7 4M1217 499l5 1l5 -1l4 -2l5 -2M1217 499l-1 6l-2 6l0 7l-2 6M1251 473l-4 1l-4 2l-3 3l-3 3M1310 418l9 -10l9 -9l8 -10l9 -10M1345 379l2 -9l2 -9l0 -10l0 -9M1319 408l7 -3l8 -3l8 -1l8 -2M1204 415l0 -4l1 -4l3 -4l3 -3M1330 412l17 3l15 8l14 10l11 13M1347 415l4 13l3 12l0 13l-3 13M1351 428l-7 5l-6 5l-6 7l-5 7M1351 428l-9 4l-10 1l-9 -1l-10 -4M1271 539l-7 -8l-3 -9l-3 -9l-1 -9M1261 522l4 -5l3 -6l1 -7l0 -7M1227 526l-8 5l-9 4l-9 2l-10 1M1201 537l-5 -4l-4 -4l-5 -3l-4 -4M1309 385l-8 1l-8 2l-8 1l-7 2M99 783l-19 1l-18 4l-18 7l-16 11M99 783l-3 -13l-2 -14l-1 -13l1 -14M117 773l-7 -15l-6 -16l-5 -16l-7 -16M129 792l-3 -14l-5 -15l-7 -13l-6 -14M117 773l-17 -3l-17 0l-17 5l-15 8M250 793l-6 -5l-6 -6l-8 -4l-7 -5M250 793l4 -6l3 -5l4 -6l2 -7M252 831l-2 -6l-2 -7l-2 -6l-3 -7M231 852l-3 -6l-2 -7l-3 -7l-3 -6M228 887l6 3l5 4l6 2l5 4M75 831l11 -10l12 -8l14 -5l14 -2M24 846l-7 -8l-6 -9l-6 -9l-7 -9M-33 842l-6 9l-6 10l-5 10l-5 11M3 875l-2 11l-3 12l-2 11l-3 12M49 866l-9 7l-11 4l-10 4l-11 5M57 840l-18 -5l-19 -6l-19 -5l-19 -5M20 829l-10 3l-10 5l-8 6l-8 7M402 797l14 6l14 8l11 11l9 13M294 892l-3 -12l-3 -12l-2 -12l-1 -12M284 876l-13 -5l-12 -4l-14 -2l-13 0M300 823l8 -1l8 -1l7 0l8 -1M321 806l3 -7l4 -7l6 -6l6 -5M289 831l6 -9l6 -9l7 -8l7 -9M344 791l13 -1l14 -1l13 1l13 0M313 803l-1 -12l-2 -12l-2 -12l-3 -11M297 808l6 8l7 8l8 6l8 7M115 851l-8 10l-9 9l-8 9l-8 10M28 895l-3 -16l-1 -15l-2 -16l-1 -16M21 832l-10 -7l-9 -8l-7 -10l-4 -11M21 832l-10 -7l-13 -4l-12 -2l-13 -2M22 848l-7 -8l-7 -9l-6 -9l-6 -10M21 854l-13 -12l-15 -9l-15 -9l-15 -9M-7 833l-10 2l-9 1l-9 -2l-10 -1M21 854l12 -11l12 -11l12 -10l13 -9M45 832l7 4l8 3l9 2l8 1M6 868l-15 -3l-15 -6l-14 -9l-14 -8M-38 850l-12 4l-13 4l-12 4l-13 2M14 889l10 -11l11 -11l12 -10l13 -9M60 848l0 -11l3 -10l3 -11l4 -10M47 857l8 -2l7 -3l7 -3l7 -3M47 857l9 5l8 6l7 7l5 8M-12 828l7 -12l7 -11l7 -12l6 -12M15 781l6 -7l3 -9l3 -8l-1 -9M2 805l9 -2l9 -2l9 -2l8 -4M249 789l3 -13l4 -12l8 -11l9 -10M254 772l-13 -10l-14 -6l-15 -1l-15 3M244 826l-4 -13l-6 -11l-7 -11l-8 -11M241 806l-7 -1l-6 -2l-7 -3l-6 -2M222 787l-7 0l-7 0l-7 0l-7 -1M249 817l-7 -3l-7 -3l-6 -4l-6 -5M190 865l0 9l-1 10l-1 9l-3 10M210 878l0 6l1 7l-1 7l-2 6M210 878l0 6l-1 5l-1 6l-1 6M125 856l-3 -15l-5 -14l-7 -14l-9 -11M129 838l14 1l14 4l13 4l12 8M256 909l3 -13l3 -13l6 -12l9 -10M256 909l14 4l14 2l14 0l15 0M199 911l9 -13l10 -12l11 -12l9 -13M209 985l19 7l19 5l19 8l18 8M209 985l-9 10l-11 8l-11 8l-11 7M225 1036l17 13l20 7l20 6l22 2M144 861l12 1l12 1l12 -1l13 -1M183 901l3 14l2 14l1 14l1 15M170 888l14 1l13 0l14 -1l13 0M177 867l3 -10l3 -9l2 -10l2 -10M165 874l3 -8l3 -8l3 -7l5 -8M165 874l11 0l11 -2l10 -3l9 -5M124 895l8 5l7 5l7 6l5 8M154 883l9 3l9 1l10 -1l9 -2M119 901l1 10l2 9l4 8l5 8M183 914l4 9l4 10l6 8l7 8" stroke="#0a0c10" stroke-width="1.0" fill="none" stroke-linecap="round" stroke-linejoin="round"/><path d="M1305 60l15 7l12 10l11 13l8 15M1281 66l13 6l13 9l10 11l9 12M1227 260l-5 4l-4 4l-5 3l-6 2M1241 233l2 6l1 6l1 7l-1 7M1227 260l3 6l2 6l-1 7l-3 5M1263 253l-6 5l-6 5l-5 5l-6 6M1258 243l7 5l7 4l7 2l8 2M1253 235l6 -1l6 -1l5 -4l5 -4M1183 139l5 3l5 3l5 4l4 3M1177 145l-1 -7l-3 -7l-4 -6l-7 -4M1172 152l4 3l4 3l3 3l3 3M1152 144l2 -6l2 -5l4 -4l5 -3M1146 135l-6 2l-6 3l-5 3l-5 3M1146 135l-1 -7l-1 -6l-1 -6l-3 -6M1174 171l-7 -3l-7 -4l-6 -4l-5 -6M1148 190l-8 4l-7 5l-4 6l-3 8M1113 106l-17 1l-17 -1l-17 -3l-17 -1M1064 101l-1 -15l3 -15l7 -14l11 -11M1064 101l-13 10l-13 9l-14 7l-13 9M1160 153l10 -10l11 -10l11 -8l13 -7M1141 146l3 -15l1 -16l0 -16l1 -15M1094 142l-22 5l-23 4l-23 1l-23 -5M1118 125l-20 -4l-19 -5l-20 -5l-20 -5M1212 148l19 -2l19 2l18 8l17 8M1192 130l8 20l8 21l8 21l13 18M1156 -29l-3 -18l-9 -17l-14 -12l-17 -8M1146 -60l7 -22l4 -23l-1 -23l-6 -22M1191 162l9 -13l8 -14l8 -12l6 -14M1177 -185l-12 9l-10 12l-8 12l-7 13M1218 -137l-8 -11l-12 -9l-13 -7l-14 -4M1204 -152l-12 -4l-12 -5l-11 -6l-11 -7M1237 -80l19 -3l18 -4l19 -1l19 0M1237 -80l13 -10l11 -12l8 -13l7 -15M1423 108l18 -7l16 -10l14 -12l12 -15M1423 108l15 5l14 7l12 9l12 11M1480 215l3 9l1 11l0 10l-3 10M1478 175l12 3l12 0l12 -2l12 -3M1480 195l-4 11l-3 12l0 13l2 12M1348 29l3 -6l4 -6l4 -5l5 -4M1342 21l-2 -5l-2 -5l-1 -5l-2 -5M1329 37l5 -4l6 -4l5 -4l6 -3M1324 45l-1 -7l-1 -6l0 -7l-2 -6M1334 29l3 -5l1 -6l-1 -5l-3 -5M1386 -19l-4 -10l-6 -9l-7 -8l-8 -7M1345 20l2 -16l-2 -16l-6 -15l-9 -13M1369 -9l12 4l11 2l12 -1l12 -1M1337 21l-1 -12l-1 -11l0 -12l0 -11M1337 21l13 -7l14 -4l14 1l14 6M1339 4l10 2l10 3l8 5l8 6M1359 31l10 10l11 10l11 9l11 9M1427 34l12 8l11 8l9 10l9 10M1197 206l4 16l2 16l0 16l-2 17M1234 185l-6 14l-1 14l1 15l4 14M1234 185l0 13l2 12l1 13l-1 12M1199 165l-9 7l-9 8l-6 10l-5 10M1212 175l-11 -3l-10 -5l-10 -6l-8 -7M1199 165l-3 -7l-4 -7l-5 -6l-6 -5M1217 165l-7 -9l-7 -9l-9 -8l-9 -7M1216 127l10 1l9 2l9 4l8 8M1214 146l9 -9l9 -8l10 -8l8 -9M1143 195l-12 1l-12 4l-12 5l-12 4M1154 164l-9 2l-8 5l-7 6l-6 7M1143 195l6 7l5 6l6 6l7 6M1187 38l29 -1l28 3l27 8l25 15M1134 -19l-8 10l-6 10l-7 10l-6 11M1134 -19l-11 4l-12 3l-11 2l-12 0M1134 -19l-10 -8l-8 -9l-6 -12l-1 -12M1050 -66l-3 -13l-6 -12l-7 -12l-6 -12M1089 -58l-12 6l-10 7l-12 6l-11 5M1089 -58l-10 6l-11 4l-11 2l-12 -1M1090 -63l2 -17l1 -17l0 -16l0 -17M1109 -48l-20 -5l-19 -7l-18 -11l-16 -12M1170 180l20 24l26 18l28 12l31 2M1378 -18l10 7l10 9l10 8l10 7M1348 -23l1 9l0 9l0 10l-1 9M1306 -72l5 -9l4 -10l1 -10l2 -10M1311 -59l-2 -8l-3 -7l-4 -7l-6 -5M1271 155l5 -18l11 -15l15 -12l16 -9M1282 142l-17 -7l-17 -6l-19 -3l-18 2M1258 5l-3 15l-6 15l-7 14l-11 11M1184 1l-5 -3l-6 -2l-6 0l-6 0M1207 8l-6 3l-7 2l-6 3l-6 2M1207 8l-4 -5l-4 -5l-6 -3l-6 -2M1158 18l-6 -6l-8 -4l-7 -5l-7 -5M1158 18l-3 5l-3 5l-3 6l-3 5M1169 28l-5 -4l-4 -6l-5 -5l-3 -6M1194 22l-8 -1l-7 0l-7 2l-7 5M1175 18l-23 -11l-25 -7l-25 -1l-26 3M1189 170l-15 0l-14 5l-12 7l-10 11M1205 178l-9 3l-8 3l-9 4l-8 3M1222 183l-12 0l-11 -1l-12 -1l-10 -4M1158 1l-2 11l-2 10l-4 9l-6 9M1158 1l7 4l5 5l5 6l3 6M1217 61l6 1l5 2l5 2l5 3M1208 57l6 3l6 3l6 3l7 1M1199 54l5 -2l6 -1l6 -3l5 -3M1278 67l1 6l1 7l1 6l2 6M1252 61l4 -4l3 -4l3 -4l1 -6M1274 45l8 -5l9 -4l9 -1l10 1M1249 51l4 8l4 8l2 9l1 9M1261 48l5 -6l7 -5l8 -2l8 -1M1237 133l-30 -10l-32 -5l-32 -6l-32 -9M1301 157l18 -33l22 -29l23 -28l31 -20M1173 60l-17 -29l-14 -30l-14 -31l-10 -32M1258 40l-5 3l-4 5l-3 5l-1 6M1279 49l-2 -6l-1 -7l0 -6l1 -7M1248 36l-8 5l-8 4l-9 2l-10 0M1295 47l-5 3l-5 2l-6 0l-6 -1M1287 52l-4 -4l-4 -4l-4 -3l-5 -3M1292 26l9 -10l8 -11l7 -12l8 -11M1275 36l8 7l9 6l10 5l10 4M1311 22l16 -6l15 -8l13 -10l13 -11M1231 -1l-6 5l-5 4l-5 4l-4 5M1240 6l-9 0l-10 0l-10 0l-10 1M1261 59l-7 0l-6 -2l-6 -3l-4 -6M1249 62l-3 10l-2 9l-3 10l-3 9M1249 62l-3 9l-4 9l-3 10l-3 9M1257 -19l-4 -8l-3 -9l-2 -9l-2 -10M1257 -42l2 -6l0 -7l-1 -7l-1 -6M1257 -30l6 -5l7 -4l7 -4l7 -3M1297 51l-10 11l-11 10l-14 6l-15 1M1297 51l0 14l1 15l6 13l9 11M1196 36l-3 17l-5 16l-6 16l-9 15M1328 -16l9 -6l10 -2l11 1l10 3M1330 -37l6 -13l4 -15l6 -14l4 -14M1330 -37l-11 -5l-13 -2l-12 1l-13 4M1136 81l-4 4l-5 4l-4 4l-6 3M1126 100l-7 5l-5 7l-4 8l-3 8M1126 100l2 8l-1 9l1 8l1 8M1096 97l-11 5l-12 4l-12 4l-11 3M1109 88l4 11l6 9l9 7l10 6M1099 102l4 6l2 6l1 7l-1 7M1099 102l4 7l3 8l0 8l1 8M1227 -59l-18 -13l-19 -10l-22 -3l-22 3M1280 -8l-21 -8l-22 -2l-22 3l-21 7M1304 19l-27 12l-24 18l-23 19l-22 20M1176 -26l-15 -14l-18 -9l-21 -5l-21 -1M1149 -46l-1 -23l2 -22l8 -21l16 -16M973 85l-12 -7l-14 -5l-14 -3l-14 -2M995 81l-16 -7l-16 -2l-16 3l-15 7M995 81l-14 4l-12 5l-13 4l-14 3M1056 37l-3 -19l-10 -17l-14 -13l-17 -9M1064 58l-10 -8l-8 -10l-4 -12l0 -13M1034 152l1 7l0 8l1 8l3 7M1034 152l-7 -5l-5 -6l-4 -7l-2 -8M1023 149l-11 -3l-12 -2l-12 -2l-12 1M1075 142l-10 8l-12 6l-12 2l-13 -1M1056 186l5 10l4 11l-2 11l-3 11M1047 176l0 9l-1 9l-3 8l-3 8M1056 186l0 8l-2 9l-2 7l-3 8M1128 98l1 7l1 8l4 7l5 6M1128 98l-4 3l-3 5l-3 4l-3 5M1159 95l-3 7l-5 6l-6 5l-7 4M1159 95l-1 6l0 6l2 6l3 6M1157 85l6 -1l6 -3l5 -3l5 -4M1310 -21l-4 -7l-2 -9l1 -8l2 -9M1324 -20l-5 8l-5 9l-7 6l-8 6M1324 -20l-5 8l-2 9l-2 10l1 9M1038 150l-12 -5l-11 -6l-9 -9l-8 -10M1060 139l-19 -6l-19 -3l-20 0l-19 2M1259 77l-8 -5l-8 -7l-9 -6l-7 -7M1256 30l-6 -6l-8 -3l-8 -1l-8 2M1259 77l7 -7l7 -6l8 -5l9 -3M1319 119l6 -5l5 -7l3 -7l2 -8M1280 94l10 3l9 5l6 8l4 9M1295 100l8 6l6 8l4 9l1 10M1238 122l-8 -6l-7 -7l-7 -8l-8 -7M1238 122l-12 7l-9 11l-8 11l-5 13M1225 39l12 -6l10 -8l8 -11l5 -12M1296 55l18 -2l19 0l18 -3l19 -4M1296 55l0 13l-1 12l-1 12l-3 12M1221 33l11 -3l11 1l10 4l10 5M1280 52l16 -2l15 -1l16 1l15 3M1221 33l18 1l17 5l16 6l16 8M1252 137l3 -9l0 -10l-2 -10l-5 -9M1286 148l4 8l5 9l6 7l8 6M1129 14l-13 -4l-12 -2l-14 1l-12 4M1129 14l8 -14l8 -15l10 -14l12 -11M1131 -9l5 -15l3 -15l2 -16l2 -15M1086 177l-23 9l-22 12l-21 13l-22 13M1112 118l13 18l14 17l18 13l20 8M1112 118l8 24l13 23l16 19l21 15M1212 -43l-7 -7l-8 -5l-8 -3l-10 -1M1212 -43l9 -5l8 -4l9 -3l9 -3M1162 9l5 -3l4 -3l6 -3l4 -3M1181 21l1 9l0 9l1 10l2 9M1181 21l4 6l4 7l4 6l5 6M1230 -42l6 4l4 6l4 6l1 7M1203 -20l5 -7l7 -5l7 -4l7 -5M1241 51l-2 -12l2 -12l4 -12l4 -11M1223 43l-5 9l-7 7l-6 8l-7 7M1104 38l-10 5l-9 6l-8 9l-7 8M1074 34l-10 0l-10 -2l-9 -4l-8 -7M1068 7l-12 -2l-13 0l-12 1l-11 4M1068 7l-12 -1l-12 -1l-12 0l-12 0M1049 -21l-9 2l-7 5l-7 7l-4 8M1080 63l2 -16l0 -16l-1 -16l-7 -15M1115 79l0 -13l-2 -14l-4 -13l-5 -12M1115 79l-14 3l-13 5l-13 8l-10 10M1133 143l23 26l24 27l27 23l27 22M1277 58l-14 0l-15 1l-14 3l-14 2M1277 58l-10 5l-9 7l-8 7l-7 9M1277 58l-7 -8l-7 -7l-8 -6l-10 -4M1338 195l-3 15l-5 14l-10 11l-13 8M1324 181l10 4l10 0l11 0l10 -2M1216 -35l-19 -10l-20 -8l-19 -8l-20 -9M1228 -9l-23 -4l-23 1l-23 4l-23 6M1026 13l-17 -21l-18 -18l-18 -19l-21 -15M1061 20l-11 25l-8 26l-7 26l2 27M1352 35l-9 -10l-9 -9l-10 -9l-12 -6M1370 18l16 -1l14 -6l13 -8l9 -12M1159 -56l14 -4l14 -5l13 -7l13 -6M1152 -33l16 -10l19 -5l19 0l18 3M1226 147l6 -8l4 -8l3 -9l1 -10M1259 172l7 -8l7 -9l5 -10l4 -10M1237 107l4 11l0 11l-2 11l-5 10M1224 103l10 -5l9 -6l8 -7l7 -8M1211 98l10 -5l10 -2l11 -3l10 -2M1207 72l7 8l7 7l8 6l10 4M1224 73l4 12l6 11l8 9l10 8M1253 87l-2 13l-3 13l-3 13l-3 13M1195 109l-20 19l-26 12l-27 6l-28 -3M1319 28l-17 12l-15 16l-11 18l-4 21M1086 212l-10 3l-9 6l-8 8l-6 9M1099 198l-3 13l-3 13l-1 14l-1 13M1060 239l-12 6l-10 9l-9 11l-4 13M1044 162l-18 -6l-17 -9l-14 -13l-11 -16M1027 146l-14 3l-14 3l-13 6l-13 6M1063 175l-16 -8l-17 -8l-16 -9l-18 -7M1027 235l-6 14l-7 13l-9 13l-9 12M1057 215l-7 9l-8 8l-10 7l-11 4M1208 42l7 8l5 9l4 10l1 10M1228 36l13 12l15 8l16 6l17 3M1120 99l27 -3l28 -1l28 0l27 0M1170 -5l-2 -8l-1 -7l0 -8l2 -7M1154 -19l-8 2l-7 0l-8 -1l-7 -1M1177 -10l-1 -5l-1 -4l-2 -5l-2 -5M1177 -10l-3 -2l-3 -3l-1 -3l-1 -4M1171 -14l2 -5l4 -4l4 -3l6 -1M1200 -7l-2 -5l-2 -4l-4 -3l-4 -3M1200 -7l4 -5l3 -5l1 -6l1 -6M1407 227l-1 15l2 14l3 14l7 13M1426 279l-11 9l-13 6l-14 3l-15 1M1516 131l8 -10l6 -12l4 -12l1 -13M1536 124l10 12l10 12l10 12l8 13M1312 81l20 10l23 2l22 -6l22 -9M1191 102l-9 2l-10 1l-10 1l-10 -1M1180 113l-11 3l-12 1l-11 3l-10 5M1213 77l-9 1l-9 1l-10 0l-9 2M1197 94l-8 -9l-8 -9l-7 -9l-6 -10M1156 72l-19 2l-18 5l-18 5l-17 9M1258 129l-2 11l1 12l3 11l3 11M1229 84l10 1l11 2l10 1l10 2M1177 78l-12 -6l-11 -9l-10 -10l-9 -10M1158 75l-2 11l-2 12l0 12l2 11M1247 90l7 -6l5 -7l4 -9l4 -8M1271 113l9 -8l8 -10l3 -12l1 -12M1241 75l4 10l6 9l6 9l6 9M1184 108l-9 4l-9 5l-9 5l-9 4M1173 133l-1 8l-2 7l-5 6l-5 5M1184 108l2 8l4 6l5 5l8 3M1110 155l-13 16l-11 18l-11 18l-8 19M1192 129l-23 2l-22 1l-22 3l-22 6M1110 155l-17 0l-16 -2l-16 -3l-16 -5M1221 329l-12 9l-9 12l-8 13l-5 14M1218 350l-12 5l-12 5l-12 4l-12 6M1261 297l11 7l13 5l13 4l13 1M1241 253l10 12l9 13l10 13l6 14M1147 317l-10 10l-13 5l-13 2l-14 -2M1147 317l-19 -10l-19 -10l-21 -6l-21 -2M1172 319l-8 15l-4 15l1 17l5 15M1264 179l6 -3l6 -4l5 -4l5 -5M1291 181l5 7l5 7l4 7l4 7M1278 179l8 -3l8 -4l9 -2l9 -2M1268 224l3 11l4 10l5 10l7 9M1243 190l10 3l9 6l8 7l5 9M1250 203l9 2l10 3l10 2l10 1M1252 105l19 -27l24 -23l28 -18l27 -20M1190 193l1 5l1 5l0 5l-1 4M1199 194l6 4l6 4l7 2l7 -1M1199 194l2 5l1 5l-2 5l-2 5M1216 174l7 -3l8 -1l7 1l7 3M1195 173l5 -6l3 -7l4 -6l2 -7M1216 45l-6 -16l-10 -13l-13 -12l-12 -11M1166 28l-19 3l-20 5l-19 1l-19 -3M1187 43l15 -12l15 -12l15 -12l15 -12M1406 119l11 20l11 19l11 20l10 19M1326 92l11 20l17 15l20 10l23 4M1096 113l1 -10l-2 -9l-5 -7l-7 -7M1103 125l-8 1l-6 4l-5 6l-3 7M1346 178l2 5l2 4l1 5l2 5M1346 178l-1 5l0 6l0 5l0 6M1347 180l0 6l0 6l-1 6l-3 6M1364 194l6 -3l5 -5l4 -5l2 -7M1372 201l-1 10l-1 9l-2 9l1 9M1399 155l4 -8l3 -9l0 -9l0 -9M1399 155l-3 -9l-5 -7l-7 -6l-8 -6M1066 105l-27 -6l-25 -14l-23 -16l-20 -19M1030 116l-16 -17l-13 -20l-11 -20l-9 -22M1280 -42l12 -17l17 -12l18 -9l19 -6M1261 -72l-18 -9l-15 -13l-12 -15l-7 -18M1320 205l-8 9l-10 7l-11 4l-12 1M1340 238l-5 14l-7 14l-11 10l-14 6M1306 9l-10 -28l1 -29l9 -29l13 -26M1149 209l12 -3l12 -1l12 1l12 3M1352 180l5 10l1 11l1 11l0 11M1371 174l8 -12l5 -15l3 -15l1 -15M1352 180l9 6l8 6l7 8l6 9M1417 301l26 -10l27 -11l27 -9l27 -10M1417 301l21 -15l22 -15l21 -16l18 -19M1417 301l23 -17l19 -23l15 -25l6 -29M1253 406l-2 30l-5 30l-7 29l-7 29M1354 441l16 15l20 11l20 8l22 2M1243 320l16 14l19 7l20 5l21 0M1253 316l-1 -14l0 -14l1 -14l2 -14M1208 408l2 23l-3 24l-5 23l-6 23M1175 194l-33 11l-33 12l-28 20l-26 23M1192 350l25 -27l21 -29l18 -32l9 -35M1197 327l10 17l11 16l7 18l10 16M1213 299l-23 7l-19 13l-15 18l-10 22M1109 303l-8 -11l-6 -12l-2 -14l1 -14M1163 281l-32 -12l-32 -8l-32 -11l-29 -16M1141 169l-5 -12l-9 -11l-10 -9l-13 -6M1149 186l-3 -13l-4 -13l-3 -13l-4 -13M1129 155l1 -15l-1 -16l-3 -14l-6 -14M1298 224l-24 -11l-22 -14l-15 -22l-10 -25M1142 257l28 -29l30 -26l30 -26l33 -22M1251 399l-14 -10l-14 -10l-13 -11l-14 -10M1180 87l-12 -25l-6 -27l-3 -28l1 -27M1338 351l37 13l34 20l31 25l30 25M1109 324l-7 -9l-4 -10l0 -11l3 -11M1103 306l2 -15l3 -14l1 -15l0 -15M1103 287l9 -12l9 -13l10 -12l9 -12M1283 485l6 23l4 23l1 23l2 23M1257 467l-8 19l-8 19l-11 18l-14 16M1248 249l-8 7l-7 7l-6 8l-4 10M1241 263l-9 1l-9 -1l-9 -2l-9 -2M1222 359l-22 28l-24 27l-28 23l-28 21M1150 269l37 -8l36 -6l37 3l34 17M1124 368l-10 -21l-6 -22l1 -22l8 -22M1257 415l0 18l-1 19l-6 17l-9 17M1301 380l-18 2l-19 0l-19 -3l-17 -6M1301 380l5 17l11 15l13 12l16 9M1231 190l-2 18l-2 18l-2 18l2 18M1252 466l2 25l9 24l15 20l20 16M1205 429l-4 15l-4 16l-7 14l-7 15M1231 445l13 9l14 9l13 10l12 11M1145 218l-13 -11l-13 -11l-15 -8l-16 -5M1137 424l1 15l3 15l7 13l9 13M1313 304l5 17l2 18l-1 17l-5 17M1304 276l31 -17l24 -26l20 -29l12 -33M1201 282l10 -19l15 -17l18 -12l19 -11M1165 392l10 10l7 11l4 13l2 14M1305 304l10 6l10 6l9 6l9 7M1290 303l3 8l1 8l0 9l-3 8M1290 303l8 -9l6 -11l7 -10l6 -11M1207 191l-10 -14l-10 -14l-10 -14l-10 -13M1268 367l-4 20l0 20l3 21l1 20M1311 460l23 -5l23 -8l20 -12l17 -17M1311 460l-10 23l-13 20l-18 17l-22 11M1134 331l5 -23l4 -24l1 -23l1 -24M1278 320l20 -4l20 -2l20 -1l20 0M1247 310l16 10l16 9l18 4l19 0M1310 324l19 5l20 0l19 -3l19 -7M1203 374l-13 -21l-13 -20l-15 -19l-14 -20M1174 349l-12 -24l-8 -26l-8 -25l-10 -25M1344 182l16 -15l17 -14l21 -6l22 -2M1231 200l-16 -13l-19 -11l-21 -7l-21 -4M1231 348l-11 -9l-13 -5l-13 0l-14 2M1203 239l31 -1l30 1l31 -1l31 -4M1388 197l24 7l25 5l24 7l24 7M1416 221l-1 19l6 18l6 18l12 15M1418 12l9 -28l10 -27l17 -24l20 -21M1359 74l29 6l28 7l28 9l26 13M1334 0l-2 -19l-5 -20l-5 -19l-3 -20M1343 -32l-21 -19l-25 -15l-26 -10l-28 -3M1334 0l-8 -15l-9 -15l-5 -17l-1 -17M1245 180l18 17l15 19l9 23l8 23M1203 105l-12 29l-6 31l-7 30l-1 31M1269 453l29 -20l29 -22l23 -27l16 -32M1393 518l7 31l0 31l-1 31l-5 30M1416 486l28 10l29 8l29 8l29 4M1376 501l12 -19l15 -19l15 -17l16 -16M1376 501l12 -24l14 -24l13 -23l18 -21M1199 247l6 25l7 25l2 26l2 26M1222 225l-3 22l-5 22l-4 23l-7 21M1125 131l0 19l6 17l11 16l15 11M1101 142l5 19l7 18l12 15l14 15M1190 215l-15 17l-16 17l-14 17l-11 20M1208 161l7 15l2 17l-2 17l-6 15M1199 188l-17 4l-17 5l-18 3l-17 6M1323 269l2 24l3 24l1 25l3 24M1285 226l4 19l5 19l7 18l11 17M1355 345l-9 19l-10 20l-12 17l-15 15M1336 313l-14 27l-19 24l-20 23l-25 19M1321 252l17 11l19 8l20 5l21 -1M1380 255l22 9l21 10l24 4l23 3M1178 61l1 42l-10 41l-17 38l-27 32M1233 77l39 -17l38 -19l35 -24l34 -26M1178 61l39 -4l39 5l35 17l29 26M1475 120l10 -14l9 -14l10 -13l12 -13M1506 111l13 -22l15 -20l16 -20l19 -17M1337 65l25 -6l26 -3l25 0l26 4M1329 100l-12 -14l-11 -16l-11 -15l-11 -16M1361 -3l18 -5l16 -7l16 -10l14 -12M1233 78l32 -10l30 -13l29 -16l29 -16M1219 121l-14 -24l-17 -22l-21 -18l-24 -15M1244 33l28 -6l27 -10l26 -12l26 -10M1274 279l14 -16l13 -15l14 -15l16 -14M1334 279l7 16l3 16l0 17l-4 16M1274 279l8 21l8 21l5 22l3 23M1299 253l-4 25l-2 25l0 25l-1 25M1299 253l-8 28l-6 28l-9 28l-4 29M1171 256l-19 -22l-19 -21l-20 -21l-17 -23M1171 256l4 -24l6 -23l10 -22l16 -18M1150 191l8 -18l7 -18l4 -20l1 -19M1369 340l-4 20l-3 20l-4 20l1 20M1354 315l1 18l5 17l7 16l11 15M1369 340l23 0l23 -1l22 -7l20 -9M1286 362l-22 16l-24 15l-23 14l-25 11M1282 320l-20 26l-18 29l-9 31l-7 32M1282 320l-18 23l-12 27l-6 29l-1 29M1402 394l-6 24l-9 24l-9 23l-9 24M1379 364l15 16l13 18l10 20l10 20M1204 -171l36 -21l33 -25l34 -23l32 -26M1204 -171l-4 -26l-3 -27l4 -27l10 -25M1365 -188l-12 -28l-11 -27l-11 -27l-10 -28M1362 -114l5 -29l-1 -30l1 -29l0 -29M1366 -226l6 -18l2 -20l-4 -19l-5 -19M1361 -111l9 -20l10 -19l10 -19l10 -19M1385 -131l-5 -20l-4 -20l-5 -20l-6 -19M1385 -131l7 -14l6 -15l3 -17l3 -16M1329 584l12 11l8 14l7 14l4 16M1312 416l7 19l7 20l8 19l9 19M1311 428l-26 5l-26 2l-26 -4l-24 -10M1302 467l13 -2l14 0l13 1l13 2M1254 563l16 3l16 5l17 2l17 2M1254 563l-1 18l0 19l-2 18l0 19M1280 452l13 -14l15 -12l17 -11l17 -10M1289 514l-4 -15l-2 -16l-2 -16l0 -16M1395 419l3 13l3 12l4 12l4 12M1395 419l15 -5l15 -4l15 -3l16 -1M1219 475l-3 8l0 8l1 8l4 7M1254 468l-3 5l-5 4l-5 4l-5 3M1283 452l15 -16l12 -18l7 -21l-2 -22M1224 428l-8 -3l-7 -4l-5 -6l-5 -7M1321 392l-12 -7l-11 -9l-10 -10l-10 -9M81 899l-10 0l-9 -2l-10 -2l-9 -5M41 883l-10 3l-9 5l-6 8l-6 9M88 873l-10 -5l-11 -4l-9 -7l-7 -9M62 840l-8 -1l-8 1l-8 1l-8 1M257 843l-5 -12l-1 -12l-2 -13l1 -13M231 874l-1 -11l1 -11l2 -11l4 -10M217 890l11 -3l10 -2l11 -1l11 -2M233 789l3 -11l3 -11l1 -11l3 -11M152 836l13 2l12 7l11 8l11 8M164 823l9 -1l8 -2l9 -3l8 -3M198 737l-2 -12l-1 -11l-1 -11l0 -12M207 717l-6 -11l-6 -11l-5 -11l-7 -11M121 770l-15 -2l-14 3l-13 6l-13 8M115 752l-10 -8l-10 -6l-11 -7l-11 -7M135 804l12 -7l14 -4l14 -2l13 3M278 838l11 -7l11 -8l10 -9l11 -8M282 816l15 -8l16 -5l15 -6l16 -6M104 851l6 -6l6 -4l7 -4l7 -3M76 855l7 2l8 3l8 2l8 1M61 865l5 -6l6 -6l6 -5l7 -3M49 868l4 -5l4 -6l4 -6l4 -5M50 854l0 -9l-2 -8l-4 -8l-6 -6M144 858l-14 -5l-15 -2l-16 0l-15 0M29 915l-1 -20l-4 -21l-3 -20l0 -21M279 815l13 -2l14 2l12 6l11 8M182 902l17 9l19 4l19 -1l19 -5M203 933l1 26l5 26l7 26l9 25M130 849l14 12l13 14l13 13l13 13M127 886l13 -4l13 -4l12 -4l12 -7M116 871l4 12l4 12l7 11l7 10M127 886l13 -1l14 -2l13 -1l14 -1M103 860l2 15l5 14l9 12l12 9M136 881l11 10l12 8l12 8l12 7M191 875l14 -2l12 -4l13 -5l12 -6" stroke="#0a0c10" stroke-width="1.5" fill="none" stroke-linecap="round" stroke-linejoin="round"/><path d="M1261 65l4 32l-6 31l-6 31l-8 31M1170 161l2 -9l5 -7l6 -6l8 -4M1157 154l-5 -10l-6 -9l-9 -8l-10 -5M1184 167l-10 4l-9 6l-9 7l-8 6M1239 -42l3 -29l2 -28l6 -29l5 -28M1239 -42l23 -12l21 -16l18 -19l13 -23M1187 5l6 -25l-1 -25l-5 -25l-11 -23M1267 43l-20 -13l-22 -12l-22 -11l-22 -11M1280 52l-3 17l-2 18l0 17l4 17M1242 73l-10 -6l-9 -8l-8 -9l-6 -10M1399 121l24 -13l23 -16l19 -19l17 -22M1469 137l4 19l5 19l2 20l0 20M1236 119l25 -19l20 -25l15 -29l5 -31M1353 57l1 -10l-2 -10l-4 -8l-6 -8M1317 51l7 -6l5 -8l5 -8l3 -9M1338 38l7 -18l10 -16l14 -13l17 -10M1338 38l-1 -17l2 -17l5 -17l9 -14M1338 38l21 -7l23 -3l23 3l22 3M1253 176l-19 9l-20 9l-17 12l-16 13M1226 182l-14 -7l-13 -10l-12 -10l-12 -10M1226 182l-9 -17l-3 -19l2 -19l5 -18M1154 147l0 17l-4 16l-7 15l-9 14M1141 -8l13 -12l11 -15l11 -14l9 -16M1152 -56l-11 -14l-11 -14l-13 -13l-13 -13M1153 -16l-19 -3l-19 1l-20 3l-19 2M1108 -57l-19 -1l-20 -3l-19 -5l-18 -6M1131 -37l-22 -11l-19 -15l-16 -19l-11 -22M1318 -18l15 -5l15 0l15 2l15 3M1318 -18l-1 -14l-2 -13l-4 -14l-5 -13M1090 67l-17 3l-17 4l-17 3l-16 5M1127 39l7 11l8 9l10 8l11 5M1220 54l-16 -3l-17 1l-16 4l-14 6M1179 -1l-13 -5l-14 -2l-14 1l-15 0M1133 4l-11 -10l-13 -5l-14 -1l-13 3M1156 -2l-5 -13l-2 -14l-1 -14l3 -14M1217 13l-10 -5l-11 -4l-12 -3l-12 -2M1199 9l-10 4l-10 3l-10 2l-11 0M1217 13l-11 5l-12 4l-12 4l-13 2M1176 171l18 -7l17 -10l16 -9l15 -13M1154 116l15 11l15 11l15 11l11 14M1197 193l5 19l8 17l12 14l15 11M1315 129l-18 9l-18 8l-19 7l-20 6M1297 162l-24 0l-23 -9l-19 -15l-15 -19M1331 95l-26 -3l-24 -9l-23 -12l-18 -19M1336 35l-1 35l6 34l13 32l19 29M1444 68l22 -22l21 -22l22 -22l25 -18M1409 61l22 -1l23 4l21 8l20 12M1336 58l7 21l8 22l11 19l15 18M1288 -11l9 -4l11 -1l10 2l10 4M1288 -11l-7 -10l-10 -8l-11 -5l-12 -2M1284 -44l-10 -4l-10 -4l-11 -2l-10 -3M1234 33l-17 -26l-21 -23l-26 -15l-28 -12M1136 -15l11 8l11 8l11 9l10 9M1289 52l-10 -3l-10 -5l-11 -4l-10 -4M1309 35l-6 7l-8 5l-8 5l-9 1M1273 19l-11 -4l-11 -4l-11 -5l-9 -7M1285 54l-12 3l-12 2l-12 3l-11 6M1261 4l-2 -11l-2 -12l0 -11l0 -12M1188 32l-11 -8l-12 -7l-12 -7l-13 -5M1148 42l-5 10l-6 9l-8 8l-8 8M1141 72l-5 9l-5 9l-5 10l-3 10M1124 83l-15 5l-13 9l-13 10l-8 14M1106 92l-7 10l-4 10l-3 12l-2 11M1015 73l-20 8l-22 4l-22 -3l-22 -5M1083 100l-11 -20l-8 -22l-8 -21l-8 -21M1319 11l-11 10l-9 12l-7 13l-8 13M1338 29l-14 6l-16 4l-15 -1l-16 -3M1338 -20l-14 0l-14 -1l-14 2l-14 3M1204 105l-1 13l3 12l6 11l8 10M1178 128l2 8l4 8l4 7l6 6M1204 105l-8 -7l-8 -7l-6 -8l-6 -9M1306 94l30 20l29 22l23 27l20 31M1265 92l-6 -15l-3 -15l-2 -16l2 -16M1265 92l15 2l15 6l13 8l11 11M1240 139l-2 -17l-3 -16l-9 -14l-9 -14M1201 39l24 0l24 4l24 5l23 7M1201 39l20 -6l22 0l20 6l17 13M1116 59l10 -21l3 -24l2 -23l-4 -23M1196 -11l6 -10l6 -11l4 -11l4 -12M1147 -8l7 9l8 8l9 7l10 5M1196 -11l7 -9l7 -10l10 -7l10 -5M1258 59l-17 -8l-18 -8l-17 -6l-19 -2M1127 52l-31 -19l-35 -13l-35 -7l-37 -3M1221 134l5 13l9 10l11 9l13 6M1199 92l12 6l13 5l13 4l13 6M1191 70l16 2l17 1l15 6l14 8M1114 -36l16 4l16 1l17 1l16 0M1117 -55l1 -12l3 -11l5 -10l7 -9M1114 -36l2 -10l4 -9l6 -8l8 -6M1149 63l8 15l7 15l9 14l11 14M1149 63l1 17l2 16l1 17l-3 17M1151 36l-14 15l-15 16l-10 18l-4 21M1226 33l-25 4l-24 11l-22 14l-18 19M1190 -4l-10 1l-10 -2l-9 -7l-7 -7M1190 -4l-7 -3l-6 -3l-6 -4l-5 -5M1203 2l-3 -9l0 -10l3 -9l4 -8M1226 66l-13 11l-10 13l-12 12l-11 11M1220 98l-23 -4l-22 -8l-19 -14l-12 -20M1226 66l3 18l7 17l8 15l14 13M1195 84l-18 -6l-19 -3l-19 1l-18 2M1239 58l2 17l6 15l11 14l13 9M1195 84l-5 12l-6 12l-5 13l-6 12M1220 130l-28 -1l-29 6l-27 7l-26 13M1219 157l3 -10l2 -10l1 -10l1 -10M1228 132l-7 -6l-5 -6l-6 -6l-5 -7M1174 81l-36 8l-37 7l-35 9l-36 11M1221 33l3 -19l1 -20l-2 -20l-7 -19M1324 248l33 13l30 20l30 20l30 20M1124 202l0 -9l-3 -9l-4 -8l-5 -7M1096 168l-1 -8l0 -7l0 -8l1 -7M1105 180l-11 -1l-11 2l-11 4l-10 5M1142 405l10 17l10 16l14 14l15 12M1142 405l18 3l18 3l18 1l17 -3M1142 405l5 14l0 15l-2 16l-5 14M1231 382l7 11l6 12l4 13l4 12M1256 212l-16 28l-13 30l-14 29l-16 28M1156 186l6 -33l7 -33l11 -33l9 -33M1136 350l-16 -11l-11 -15l-6 -18l0 -19M1177 419l29 12l27 16l24 20l26 18M1125 388l19 20l15 23l14 25l16 22M1288 415l-15 36l-9 38l-4 39l2 40M1192 281l-34 6l-35 -1l-34 -10l-31 -16M1184 398l22 -21l15 -27l12 -28l0 -30M1167 516l14 5l15 1l15 -2l15 -4M1167 516l-19 8l-18 8l-19 6l-20 4M1137 301l17 -14l18 -13l19 -13l20 -11M1257 198l28 -9l30 -5l29 -2l30 0M1291 379l8 5l8 8l6 8l5 9M1275 384l6 7l3 8l2 8l-1 9M1259 391l12 7l9 11l6 13l3 13M1261 174l-19 26l-20 25l-23 22l-23 22M1184 77l-18 20l-19 19l-22 15l-24 11M1214 105l-3 28l-3 28l-9 27l-9 27M1178 224l21 7l19 10l18 12l16 15M1215 245l14 24l11 27l13 25l10 26M1194 244l33 -14l33 -14l35 -7l36 -4M1194 244l22 -20l22 -19l20 -21l19 -23M1253 178l17 23l15 25l18 22l20 21M1268 225l21 30l25 27l22 31l19 32M1268 225l25 16l28 11l29 4l30 -1M1202 40l14 -30l15 -31l14 -31l6 -33M1206 -15l-30 -24l-31 -21l-34 -18l-36 -12M1206 -15l36 -13l37 -4l38 4l37 7M1219 158l-39 -29l-43 -21l-47 -11l-46 -12M1245 103l-29 -36l-15 -44l-4 -46l0 -46M1219 158l-32 -22l-38 -12l-39 -2l-38 12M1216 267l28 8l30 4l30 0l30 0M1259 248l40 5l36 15l33 23l28 28M1175 290l-4 -34l-9 -33l-12 -32l-14 -31M1211 24l-18 -47l-8 -49l7 -50l12 -49M1354 -78l8 -36l2 -37l1 -37l1 -38M1318 -29l8 -30l15 -27l20 -25l24 -20M1270 490l0 -18l-5 -19l-10 -16l-14 -12M1252 493l18 -6l18 -8l14 -12l12 -15M1273 508l-16 10l-16 8l-18 3l-18 2M1260 421l-13 -1l-12 3l-11 5l-9 9M1286 540l-15 -1l-15 -4l-15 -3l-14 -6M1251 640l-2 -18l6 -10M1255 652l10 -20l2 -12M1262 780l-8 14l-2 16M1275 800l-14 14l-6 22M1290 812l-8 20l-14 8M1300 880l16 -6l20 6M1310 876l-6 -12M1322 878l6 -14M133 815l-17 -16l-17 -16l-18 -15l-17 -16M133 815l-4 -23l-12 -19l-16 -15l-19 -13M79 888l-4 -19l-1 -19l1 -19l4 -19M43 844l-19 2l-19 0l-19 -2l-19 -2M64 863l-15 3l-15 3l-15 3l-16 3M96 910l-10 -25l-11 -24l-18 -21l-19 -18M341 845l17 -10l16 -12l14 -12l14 -14M306 907l-12 -15l-10 -16l-11 -15l-12 -15M47 853l14 0l15 2l14 -2l14 -2M37 870l12 -2l12 -3l10 -6l10 -6M21 910l-7 -21l-8 -21l-8 -20l-10 -20M239 843l5 -17l4 -18l1 -19l5 -17M255 828l-6 -11l-8 -11l-10 -10l-9 -9M168 858l11 2l11 5l10 6l10 7M126 873l-1 -17l4 -18l7 -16l10 -15M121 802l5 -9l4 -10l6 -8l6 -9" stroke="#0a0c10" stroke-width="2.0" fill="none" stroke-linecap="round" stroke-linejoin="round"/><path d="M1216 98l21 -12l22 -11l22 -9l24 -6M1248 225l-7 8l-7 7l-5 10l-2 10M1248 225l5 10l5 8l5 10l2 10M1137 103l-24 3l-25 1l-24 -6l-21 -13M1124 136l17 10l19 7l20 3l20 -3M1137 103l-19 22l-24 17l-27 11l-28 7M1165 83l11 24l16 23l20 18l23 14M1201 58l-17 -28l-17 -28l-11 -31l-10 -31M1233 -122l-15 -15l-14 -15l-14 -16l-13 -17M1233 -50l4 -30l6 -30l6 -29l6 -29M1239 186l-17 -3l-17 -5l-16 -8l-14 -11M1189 50l10 4l9 3l9 4l10 4M1243 65l9 -4l9 -1l9 3l8 4M1225 61l12 -5l12 -5l12 -3l13 -3M1258 47l17 -11l17 -10l19 -4l20 -2M1333 61l-17 -6l-19 -4l-19 1l-19 3M1318 2l10 -18l2 -21l-1 -20l-5 -20M1327 47l-23 -28l-24 -27l-25 -28l-28 -23M1220 66l-11 -32l-14 -32l-19 -28l-27 -20M1089 132l-14 5l-13 5l-14 4l-14 6M1089 132l-14 10l-17 6l-17 2l-18 -1M1039 150l2 13l6 13l9 10l11 8M1145 89l-8 5l-9 4l-8 3l-9 3M1152 65l1 10l4 10l2 10l4 9M1122 100l-21 13l-21 12l-20 14l-22 11M1222 117l14 11l16 9l16 7l18 4M1127 90l-15 28l-16 28l-10 31l-5 32M1120 37l-16 1l-15 0l-15 -4l-12 -9M1098 23l-16 -7l-14 -9l-12 -13l-7 -15M1154 76l-19 4l-20 -1l-19 -5l-16 -11M1313 60l-18 1l-18 -3l-17 -7l-17 -6M1301 128l3 20l7 18l13 15l14 14M1302 26l-28 -2l-26 -13l-20 -20l-12 -26M1306 56l23 -9l23 -12l18 -17l14 -21M1131 10l10 -22l11 -21l7 -23l6 -23M1109 182l-10 16l-13 14l-13 13l-13 14M1082 189l-19 -14l-19 -13l-17 -16l-12 -20M1082 189l-12 13l-13 13l-14 11l-16 9M1159 78l15 -13l17 -12l17 -11l20 -6M1370 187l21 18l16 22l11 25l8 27M1473 175l9 -19l15 -15l19 -10l20 -7M1221 307l0 22l-3 21l-6 20l-10 19M1225 234l16 19l12 21l8 23l3 24M1221 307l-24 9l-25 3l-25 -2l-26 -2M1238 177l13 1l13 1l14 0l13 2M1238 177l5 13l7 13l8 11l10 10M1174 185l8 4l8 4l9 1l9 2M1175 172l10 1l10 0l11 0l10 1M1268 34l-25 10l-27 1l-25 -7l-25 -10M1300 80l26 12l26 9l27 8l27 10M1117 165l-4 -14l-4 -13l-6 -13l-7 -12M1338 173l8 5l8 5l8 5l7 5M1338 173l9 7l9 6l8 8l8 7M1379 180l9 -6l7 -9l4 -10l1 -11M1338 -2l-30 -18l-28 -22l-19 -30l-9 -35M1169 267l-10 -18l-7 -20l-3 -20l1 -21M1335 189l17 -9l19 -6l19 -5l19 0M1216 409l37 -3l35 6l34 14l32 15M1114 349l27 -22l33 -12l35 -1l34 6M1185 303l-19 -2l-19 0l-19 2l-19 0M1157 203l-8 -17l-8 -17l-12 -14l-12 -14M1323 362l-22 18l-23 16l-21 19l-19 21M1178 417l27 12l26 16l21 21l15 26M1328 283l-15 21l-12 24l-6 25l3 27M1153 330l-2 16l1 16l5 16l8 14M1236 191l-29 0l-30 -1l-29 -2l-29 -6M1266 332l2 35l5 35l14 32l24 26M1314 191l-26 10l-28 3l-29 -4l-26 -9M1329 104l18 32l20 31l21 30l28 24M1329 104l30 -30l30 -30l29 -32l25 -35M1280 84l24 -23l19 -29l11 -32l9 -32M1137 49l36 24l30 32l27 34l15 41M1231 425l38 28l40 23l40 24l44 18M1250 481l41 14l42 7l43 -1l40 -15M1123 44l55 17l55 16l57 10l55 16M1379 110l32 6l32 5l32 -1l31 -9M1323 136l6 -36l8 -35l11 -35l13 -33M1206 165l13 -44l14 -43l11 -45l7 -45M1323 264l13 27l18 24l15 25l13 28M1277 236l3 42l2 42l4 42l1 43M1323 264l20 32l16 35l20 33l23 30M1266 550l18 16l22 11l23 7l24 0M1332 422l20 -8l22 -1l21 6l20 10M1266 468l-12 0l-12 0l-12 2l-11 5M1336 447l-6 -18l-5 -18l-4 -19l-3 -19M1272 690l14 -22l8 -30l2 -14M1290 650l10 -4M1294 640l-8 -6M1296 626l10 -2M1310 790l-12 10l-18 4M1318 820l-16 12l-12 2M95 903l-14 -4l-13 -6l-13 -6l-14 -4M99 882l-11 -9l-9 -11l-9 -11l-8 -11M204 905l13 -15l14 -16l14 -15l12 -16M243 828l-2 -13l-3 -13l-5 -13l-8 -11M140 848l12 -12l12 -13l14 -10l15 -8M155 785l18 -13l14 -17l11 -18l9 -20M148 817l-13 -13l-9 -16l-5 -18l-6 -18M277 905l-2 -23l2 -22l1 -22l4 -22M73 874l-12 -9l-11 -11l-10 -12l-8 -13M263 868l8 -26l8 -27l9 -26l9 -25M98 830l32 19l26 26l26 27l21 31M74 833l16 11l14 12l12 15l11 15M69 842l17 8l17 10l17 10l16 11M129 850l20 10l21 8l21 7l21 9" stroke="#0a0c10" stroke-width="2.5" fill="none" stroke-linecap="round" stroke-linejoin="round"/><path d="M1134 53l26 -25l27 -23l25 -24l27 -23M1299 42l-19 10l-19 11l-19 10l-20 7M1132 16l9 -24l5 -24l6 -24l6 -25M1147 29l-20 10l-19 14l-18 14l-17 15M1222 16l-20 -13l-23 -4l-23 -1l-23 6M1155 85l-1 31l7 29l15 26l21 22M1341 59l-10 36l-16 34l-18 33l-20 32M1301 65l35 -7l37 -3l36 6l35 7M1293 5l-5 -16l-4 -16l0 -17l3 -16M1209 29l-21 3l-20 3l-20 7l-18 10M1295 1l24 10l19 18l11 24l4 26M1229 82l-13 11l-12 12l-13 12l-13 11M1116 -16l-2 -20l3 -19l8 -18l12 -15M1142 -16l9 25l0 27l-2 27l-5 27M1213 169l6 -12l5 -13l4 -12l0 -14M1313 186l7 19l8 17l12 16l11 16M1133 214l-9 -12l-10 -11l-9 -11l-9 -12M1115 318l12 20l8 21l4 23l3 23M1219 333l5 16l4 17l3 16l1 17M1328 243l-30 -19l-29 -20l-27 -23l-25 -25M1295 416l-23 -5l-21 -12l-15 -19l-9 -22M1254 204l0 16l-2 15l-4 14l-7 14M1275 301l15 2l15 1l15 0l15 -2M1215 302l32 8l31 10l32 4l32 5M1169 415l6 25l2 26l-5 25l-5 25M1226 396l17 -1l16 -4l16 -7l16 -5M1143 200l35 24l37 21l36 22l37 22M1148 232l46 12l47 6l47 -6l47 -5M1130 185l37 -41l25 -49l10 -55l4 -55M1185 208l34 -50l26 -55l14 -59l1 -60M1257 541l-3 22l3 22l11 20l13 19M1300 762l14 -26l14 -22l8 -6M1316 734l4 -22M1326 722l10 -30M177 904l-14 -30l-15 -30l-15 -29l-14 -30M90 914l-11 -26l-15 -25l-21 -19l-22 -18M290 924l16 -17l12 -21l12 -20l11 -21M185 909l-13 -17l-14 -17l-14 -17l-13 -17M217 904l4 -21l7 -21l11 -19l16 -15M103 874l23 -1l22 -4l20 -11l16 -15M69 806l17 0l18 -1l17 -3l16 -6" stroke="#0a0c10" stroke-width="3.0" fill="none" stroke-linecap="round" stroke-linejoin="round"/><path d="M1197 174l-13 -7l-14 -6l-13 -7l-14 -6M1328 114l36 1l35 6l36 6l34 10M1299 47l18 4l18 4l18 2l19 -2M1266 86l25 -15l25 -15l22 -18l20 -20M1303 156l-24 12l-26 8l-27 6l-27 0M1193 31l-19 -24l-21 -23l-22 -21l-23 -20M1272 51l14 -23l16 -24l16 -22l17 -22M1268 38l-16 -10l-17 -8l-18 -7l-18 -4M1319 27l-10 8l-10 9l-10 8l-9 9M1287 73l-2 -19l-5 -18l-7 -17l-12 -15M1159 62l-18 10l-17 11l-18 9l-19 7M1118 110l-35 -10l-34 -14l-34 -13l-35 -11M1169 46l-9 9l-8 10l-6 12l-1 12M1207 180l18 -19l15 -22l13 -23l12 -24M1137 33l32 2l32 4l31 10l28 15M1130 -8l17 0l16 -1l17 0l16 -2M1284 -5l18 31l11 34l0 35l-12 33M1185 48l6 22l8 22l11 21l11 21M1243 16l-13 -6l-14 -3l-13 -5l-13 -6M1224 3l4 31l-2 32l-6 32l-13 29M1283 33l-22 13l-22 12l-21 14l-23 12M1178 160l-3 12l-1 13l3 13l4 12M1151 338l46 38l34 49l19 56l1 59M1152 51l32 26l30 28l26 33l21 36M1167 59l35 35l29 40l22 44l15 47M1136 317l39 -27l41 -23l43 -19l42 -22M1151 37l60 -13l58 -18l49 -35l36 -49M1283 716l-14 10l-16 6l-6 10M1268 727l-8 22l4 30l14 24l16 10M11 922l10 -17l8 -17l8 -18l10 -17M109 911l-15 -21l-21 -16l-25 -7l-25 -6" stroke="#0a0c10" stroke-width="3.5" fill="none" stroke-linecap="round" stroke-linejoin="round"/><path d="M1245 162l5 15l4 16l0 17l-6 15M1182 47l-25 26l-20 30l-13 33l-8 35M1220 -17l13 -33l5 -36l-5 -36l-18 -31M1172 44l17 6l18 6l18 5l18 4M1115 129l-26 3l-26 5l-24 13l-20 16M1168 98l-14 -22l-16 -21l-18 -18l-22 -14M1136 173l-27 9l-27 7l-27 3l-28 0M1336 179l34 8l35 4l35 -4l33 -12M1195 168l22 30l8 36l3 37l-7 36M1226 161l12 16l13 15l14 14l14 14M1327 165l11 8l13 5l14 2l14 0M1185 39l46 26l49 19l49 20l52 9M1145 169l61 -4l60 -9l57 -20l56 -26M1119 214l54 -4l53 8l51 18l46 28M89 924l6 -21l4 -21l2 -21l-3 -22M276 900l-9 -25l-13 -23l-11 -24l-15 -22M112 907l16 -28l12 -31l8 -31l7 -32M251 900l12 -32l12 -33l6 -35l-5 -34M95 851l34 -1l33 1l34 -3l33 -2" stroke="#0a0c10" stroke-width="4.0" fill="none" stroke-linecap="round" stroke-linejoin="round"/><path d="M-9 810l26 -3l26 1l26 -2l26 -4" stroke="#0a0c10" stroke-width="4.5" fill="none" stroke-linecap="round" stroke-linejoin="round"/><path d="M1247 622l8 30l12 28l16 36l20 50l18 50l18 50" stroke="#0a0c10" stroke-width="5.5" fill="none" stroke-linecap="round" stroke-linejoin="round"/><path d="M1266 381l3 -1l1 3zM1130 160l5 -2l2 5zM1325 127l3 -1l1 3zM1217 314l5 -2l2 5zM1169 73l5 -2l2 5zM1212 171l3 -1l1 3zM1136 368l5 -2l2 5zM1214 349l3 -1l1 3zM1206 227l3 -1l1 3zM1267 22l3 -1l1 3zM1217 73l3 -1l1 3zM1241 31l5 -2l2 5zM1191 365l3 -1l1 3zM1160 213l3 -1l1 3zM1191 320l5 -2l2 5zM1129 334l4 -2l2 4zM1197 219l4 -2l2 4zM1310 406l5 -2l2 5zM1265 164l3 -1l1 3zM1199 75l5 -2l2 5zM1278 1l5 -2l2 5zM1216 239l5 -2l2 5zM1149 164l4 -2l2 4zM1319 217l6 -3l3 6zM1157 343l4 -2l2 4zM1180 144l5 -2l2 5zM1167 160l3 -1l1 3zM1253 125l5 -2l2 5zM1291 338l6 -3l3 6zM1314 270l5 -2l2 5zM1246 419l5 -2l2 5zM1272 115l4 -2l2 4zM1323 217l6 -3l3 6zM1155 294l4 -2l2 4zM1204 81l5 -2l2 5zM1275 169l5 -2l2 5zM1213 69l5 -2l2 5zM1247 201l5 -2l2 5zM1296 236l4 -2l2 4zM1303 273l4 -2l2 4zM1257 92l5 -2l2 5zM1181 238l4 -2l2 4zM1217 164l5 -2l2 5zM1276 381l5 -2l2 5zM1227 347l5 -2l2 5zM1186 302l6 -3l3 6zM1317 376l4 -2l2 4zM1186 175l5 -2l2 5zM1295 4l4 -2l2 4zM1213 394l3 -1l1 3zM1226 146l5 -2l2 5zM1159 136l3 -1l1 3zM1159 83l4 -2l2 4zM1254 374l4 -2l2 4zM1287 107l6 -3l3 6zM1184 235l6 -3l3 6zM1203 258l6 -3l3 6zM1241 305l3 -1l1 3zM1248 331l4 -2l2 4zM1254 341l4 -2l2 4zM1317 345l3 -1l1 3zM1280 115l4 -2l2 4zM1190 34l3 -1l1 3zM1265 194l5 -2l2 5zM1323 249l5 -2l2 5zM1309 369l4 -2l2 4zM1306 88l6 -3l3 6zM1180 266l4 -2l2 4zM1268 271l4 -2l2 4zM1242 70l4 -2l2 4zM1152 281l3 -1l1 3zM1234 318l5 -2l2 5zM1282 12l3 -1l1 3zM1138 223l3 -1l1 3zM1331 111l3 -1l1 3zM1329 209l3 -1l1 3zM1317 388l3 -1l1 3zM1184 41l4 -2l2 4zM1172 281l4 -2l2 4zM1251 111l3 -1l1 3zM1215 352l6 -3l3 6zM1230 224l4 -2l2 4zM1298 225l4 -2l2 4zM1146 322l5 -2l2 5zM1185 151l3 -1l1 3zM1198 212l3 -1l1 3zM1194 154l5 -2l2 5zM1176 41l5 -2l2 5zM1271 279l3 -1l1 3zM1194 359l4 -2l2 4zM1183 39l6 -3l3 6zM1228 285l6 -3l3 6zM1143 159l4 -2l2 4zM1308 156l4 -2l2 4zM1180 337l5 -2l2 5zM1282 94l5 -2l2 5zM1294 320l3 -1l1 3zM1232 95l4 -2l2 4zM1190 336l3 -1l1 3zM1192 17l4 -2l2 4zM1168 80l4 -2l2 4zM1146 88l3 -1l1 3zM1184 319l5 -2l2 5zM1271 169l4 -2l2 4zM1186 326l5 -2l2 5zM1254 253l6 -3l3 6zM1299 304l5 -2l2 5zM1239 416l4 -2l2 4zM1315 92l4 -2l2 4zM1305 237l6 -3l3 6zM1270 232l6 -3l3 6zM1217 129l5 -2l2 5zM1290 278l5 -2l2 5zM1296 196l5 -2l2 5zM1206 249l5 -2l2 5zM1197 152l5 -2l2 5zM1136 307l4 -2l2 4zM1228 239l4 -2l2 4zM1206 87l6 -3l3 6zM1251 329l5 -2l2 5zM1216 90l5 -2l2 5zM1168 263l3 -1l1 3zM1331 270l3 -1l1 3zM1276 111l6 -3l3 6zM1142 245l3 -1l1 3zM1254 112l4 -2l2 4zM1252 352l5 -2l2 5zM1225 114l3 -1l1 3zM1207 46l4 -2l2 4zM1321 166l6 -3l3 6zM1155 105l3 -1l1 3zM1260 289l3 -1l1 3zM1290 415l4 -2l2 4zM1140 347l3 -1l1 3zM1292 88l4 -2l2 4zM1309 186l4 -2l2 4zM1308 202l6 -3l3 6zM1245 264l5 -2l2 5zM1313 1l3 -1l1 3zM1234 128l3 -1l1 3zM1170 225l3 -1l1 3zM1222 297l3 -1l1 3zM1132 266l4 -2l2 4zM1303 34l4 -2l2 4zM1324 334l3 -1l1 3zM1208 51l5 -2l2 5zM1263 309l3 -1l1 3zM1150 125l4 -2l2 4zM1252 14l5 -2l2 5zM1198 198l6 -3l3 6zM1158 181l4 -2l2 4zM1130 414l5 -2l2 5zM1201 226l5 -2l2 5zM1187 418l3 -1l1 3zM1204 46l5 -2l2 5zM1255 128l4 -2l2 4zM1133 98l5 -2l2 5zM1199 49l4 -2l2 4zM1308 109l3 -1l1 3zM1141 23l3 -1l1 3z" fill="#0c0f12"/><path d="M349 835l4 -3l2 5zM60 848l4 -3l2 5zM134 800l4 -3l2 5zM52 863l4 -3l2 5zM328 830l4 -3l2 5zM351 877l4 -3l2 5zM17 834l4 -3l2 5zM220 820l4 -3l2 5zM164 862l4 -3l2 5zM36 833l4 -3l2 5zM97 850l4 -3l2 5zM5 807l4 -3l2 5zM37 895l4 -3l2 5zM167 827l4 -3l2 5zM286 850l4 -3l2 5zM159 816l4 -3l2 5zM175 846l4 -3l2 5zM224 901l4 -3l2 5zM168 902l4 -3l2 5zM19 843l4 -3l2 5zM155 895l4 -3l2 5zM0 833l4 -3l2 5zM18 889l4 -3l2 5zM239 819l4 -3l2 5zM43 840l4 -3l2 5zM392 864l4 -3l2 5zM229 811l4 -3l2 5zM249 895l4 -3l2 5zM197 820l4 -3l2 5zM201 866l4 -3l2 5zM306 892l4 -3l2 5zM52 888l4 -3l2 5zM195 841l4 -3l2 5zM187 864l4 -3l2 5zM389 857l4 -3l2 5zM367 825l4 -3l2 5zM12 890l4 -3l2 5zM386 801l4 -3l2 5zM366 880l4 -3l2 5zM173 838l4 -3l2 5z" fill="#2a3a22" opacity=".8"/></svg><div id="main"><div class="glass"></div><div class="edge"></div></div><svg class="abs" style="left:9px;top:6px" width="16" height="17" viewBox="0 0 16 17"><rect x="0" y="2" width="5" height="5" fill="#6b58a6"/><rect x="3" y="2" width="2" height="5" fill="#8a3f82"/><rect x="5" y="3" width="5" height="4" fill="#d6304a"/><rect x="10" y="0" width="2" height="7" fill="#e0906a"/><rect x="12" y="0" width="2" height="7" fill="#b08a50"/><rect x="14" y="0" width="2" height="7" fill="#4f8f44"/><path d="M5.500 8h6l-3 4.500z" fill="#f01822"/><circle cx="8.500" cy="14.500" r="1.700" fill="#1420f0"/></svg><div class="abs" style="left:18px;top:3px;width:545px;height:24px;border-radius:12px;background:radial-gradient(ellipse at center,rgba(255,255,255,.42) 0,rgba(255,255,255,.30) 45%,rgba(255,255,255,0) 100%);filter:blur(3px)"></div><span class="t seg" style="left:29px;top:8px;letter-spacing:-0.001px;color:#000;">Probe for EPMA [C:\UserData\Donovan\Standards\Wollastonite-new standard_10-02-2007.MDB]</span><div class="abs capbtns" style="left:1017px;top:1px;width:103px;height:19px"></div><div class="abs" style="left:1044px;top:2px;width:1px;height:17px;background:rgba(255,255,255,.35)"></div><div class="abs" style="left:1071px;top:2px;width:1px;height:17px;background:rgba(255,255,255,.35)"></div><div class="abs" style="left:1027px;top:11px;width:10px;height:3px;background:#f4f4f4;box-shadow:0 0 1px #222"></div><div class="abs" style="left:1054px;top:5px;width:10px;height:9px;border:2px solid #f4f4f4;border-top-width:3px;box-shadow:0 0 1px #222"></div><svg class="abs" style="left:1092px;top:6px" width="10" height="9" viewBox="0 0 10 9"><path d="M1.200 .8L8.800 8.200M8.800 .8L1.200 8.200" stroke="#f6f6f6" stroke-width="2.700"/></svg><div class="abs" style="left:8px;top:30px;width:1111px;height:759px;background:#f0f0f0;"></div><div class="abs" style="left:7px;top:29px;width:1113px;height:761px;border:1px solid #0c0d10;border-radius:1px;box-shadow:0 0 0 1px rgba(200,203,210,.8)"></div><div class="abs" style="left:8px;top:30px;width:1111px;height:19px;background:linear-gradient(#ffffff 0,#f3f5fa 30%,#dfe4f1 42%,#d9dfef 88%,#b9c2d9 100%);"></div><div class="abs" style="left:8px;top:49px;width:1111px;height:2px;background:#fcfcfc"></div><span class="t seg" style="left:15px;top:33px;letter-spacing:-0.384px;color:#6d6d6d;">File</span><span class="t seg" style="left:47px;top:33px;letter-spacing:-0.196px;color:#6d6d6d;">Edit</span><span class="t seg" style="left:81px;top:33px;letter-spacing:-0.227px;color:#6d6d6d;">Standard</span><span class="t seg" style="left:142px;top:33px;letter-spacing:-0.521px;color:#6d6d6d;">X-Ray</span><span class="t seg" style="left:187px;top:33px;letter-spacing:0.067px;color:#6d6d6d;">Analytical</span><span class="t seg" style="left:253px;top:33px;letter-spacing:0.239px;color:#6d6d6d;">Window</span><span class="t seg" style="left:311px;top:33px;letter-spacing:-0.406px;color:#6d6d6d;">Run</span><span class="t seg" style="left:346px;top:33px;letter-spacing:0.358px;color:#6d6d6d;">Output</span><span class="t seg" style="left:398px;top:33px;letter-spacing:0.089px;color:#6d6d6d;">Help</span><div class="abs" style="left:288px;top:51px;width:1px;height:22px;background:#a0a0a0"></div><div class="abs" style="left:289px;top:51px;width:1px;height:22px;background:#696969"></div><div class="abs" style="left:290px;top:51px;width:1px;height:22px;background:#fff"></div><div class="abs" style="left:569px;top:51px;width:1px;height:22px;background:#a0a0a0"></div><div class="abs" style="left:570px;top:51px;width:1px;height:22px;background:#696969"></div><div class="abs" style="left:571px;top:51px;width:1px;height:22px;background:#fff"></div><div class="abs" style="left:851px;top:51px;width:1px;height:22px;background:#a0a0a0"></div><div class="abs" style="left:852px;top:51px;width:1px;height:22px;background:#696969"></div><div class="abs" style="left:853px;top:51px;width:1px;height:22px;background:#fff"></div><span class="t bb" style="left:148px;top:55px;letter-spacing:-0.225px;transform:translateX(-50%);color:#a0a0a0;text-shadow:1px 1px 0 #fff;">Acquire!</span><span class="t bb" style="left:430px;top:55px;letter-spacing:-0.181px;transform:translateX(-50%);color:#000;">Analyze!</span><span class="t bb" style="left:711px;top:55px;letter-spacing:-0.276px;transform:translateX(-50%);color:#a0a0a0;text-shadow:1px 1px 0 #fff;">Automate!</span><span class="t bb" style="left:993px;top:55px;letter-spacing:-0.149px;transform:translateX(-50%);color:#000;">Plot!</span><div class="abs" style="left:8px;top:73px;width:1111px;height:1px;background:#fff"></div><div class="abs" style="left:9px;top:74px;width:1110px;height:696px;background:#fff;border:1px solid #e3e3e3;border-top:2px solid #6a6a6a;border-left:2px solid #6a6a6a;box-shadow:inset 1px 1px 0 #a8a8a8"></div><div class="abs" style="left:1100px;top:76px;width:17px;height:693px;background:#f0f0f0;border-left:1px solid #e3e3e3"></div><svg class="abs" style="left:1105px;top:84px" width="7" height="4" viewBox="0 0 7 4"><path d="M0 4L3.500 0L7 4z" fill="#505050"/></svg><div class="abs" style="left:1101px;top:223px;width:15px;height:45px;background:linear-gradient(90deg,#f3f3f3,#dcdcdc);border:1px solid #979797;border-radius:2px"></div><pre class="abs mono" style="left:12px;top:112.5px">Probe Data File: C:\UserData\Donovan\Standards\Wollastonite-new standard_10-02-2007.MDB</pre><pre class="abs mono" style="left:12px;top:128.5px">John Donovan</pre><pre class="abs mono" style="left:12px;top:144.5px">New wollastonite standard</pre><pre class="abs mono" style="left:12px;top:176.5px">Willsboro, NY</pre><pre class="abs mono" style="left:12px;top:224.5px">Probe for EPMA Xtreme Edition for Electron Probe Micro Analysis</pre><pre class="abs mono" style="left:12px;top:240.5px">Database File: C:\UserData\Donovan\Standards\Wollastonite-new standard_10-02-2007.MDB</pre><pre class="abs mono" style="left:12px;top:256.5px">Database File Type: PROBE</pre><pre class="abs mono" style="left:12px;top:272.5px">DataFile Version Number: 7.2.3</pre><pre class="abs mono" style="left:12px;top:288.5px">Program Version Number: 12.4.8</pre><pre class="abs mono" style="left:12px;top:304.5px">Database File User Name: John Donovan</pre><pre class="abs mono" style="left:12px;top:320.5px">Database File Description: Willsboro, NY</pre><pre class="abs mono" style="left:12px;top:352.5px">Database Created: 10/2/2007 4:51:52 PM</pre><pre class="abs mono" style="left:12px;top:368.5px">Last Updated: 10/2/2007 4:51:52 PM</pre><pre class="abs mono" style="left:12px;top:384.5px">Last Modified: 9/13/2018 10:22:59 AM</pre><pre class="abs mono" style="left:12px;top:400.5px">Current Date and Time: 9/14/2018 12:19:54 PM</pre><pre class="abs mono" style="left:12px;top:416.5px">Nominal Beam: 30 (nA)</pre><pre class="abs mono" style="left:12px;top:432.5px">Faraday/Absorbed Averages: 1</pre><pre class="abs mono" style="left:12px;top:480.5px">Correction Method and Mass Absorption Coefficient File:</pre><pre class="abs mono" style="left:12px;top:496.5px">ZAF or Phi-Rho-Z Calculations</pre><pre class="abs mono" style="left:12px;top:512.5px">LINEMU   Henke (LBL, 1985) &lt; 10KeV / CITZMU &gt; 10KeV</pre><pre class="abs mono" style="left:12px;top:544.5px">Current ZAF or Phi-Rho-Z Selection:</pre><pre class="abs mono" style="left:12px;top:560.5px">Armstrong/Love Scott (default)</pre><pre class="abs mono" style="left:12px;top:592.5px">Correction Selections:</pre><pre class="abs mono" style="left:12px;top:608.5px">Phi(pz) Absorption of Armstrong/Packwood-Brown 1981 MAS</pre><pre class="abs mono" style="left:12px;top:624.5px">Stopping Power of Love-Scott</pre><pre class="abs mono" style="left:12px;top:640.5px">Backscatter Coefficient of Love-Scott</pre><pre class="abs mono" style="left:12px;top:656.5px">Backscatter of Love-Scott</pre><pre class="abs mono" style="left:12px;top:672.5px">Mean Ionization of Berger-Seltzer</pre><pre class="abs mono" style="left:12px;top:688.5px">Phi(pz) Equation of Love-Scott</pre><pre class="abs mono" style="left:12px;top:704.5px">Reed/JTA w/ M-Line Correction and JTA Intensity Mod.</pre><pre class="abs mono" style="left:12px;top:720.5px">Fluorescence by Beta Lines Included</pre><div class="abs" style="left:8px;top:770px;width:1111px;height:5px;background:#fff"></div><div class="abs" style="left:8px;top:771px;width:1111px;height:1px;background:#6e6e6e"></div><div class="abs" style="left:8px;top:774px;width:1111px;height:1px;background:#a6a6a6"></div><div class="abs" style="left:8px;top:775px;width:1111px;height:13px;background:#f0f0f0"></div><div class="abs" style="left:8px;top:788px;width:1111px;height:1px;background:#fff"></div><span class="t msb" style="left:13px;top:774px;letter-spacing:-0.001px;">Open: Ready</span><div id="dlg"><div class="dglass"></div><div class="dright"></div><div class="dedge"></div></div><svg class="abs" style="left:437px;top:274px" width="16" height="17" viewBox="0 0 16 17"><rect x="0" y="2" width="5" height="5" fill="#6b58a6"/><rect x="3" y="2" width="2" height="5" fill="#8a3f82"/><rect x="5" y="3" width="5" height="4" fill="#d6304a"/><rect x="10" y="0" width="2" height="7" fill="#e0906a"/><rect x="12" y="0" width="2" height="7" fill="#b08a50"/><rect x="14" y="0" width="2" height="7" fill="#4f8f44"/><path d="M5.500 8h6l-3 4.500z" fill="#f01822"/><circle cx="8.500" cy="14.500" r="1.700" fill="#1420f0"/></svg><div class="abs" style="left:450px;top:271px;width:62px;height:22px;border-radius:11px;background:radial-gradient(ellipse at center,rgba(255,255,255,.55) 0,rgba(255,255,255,.35) 50%,rgba(255,255,255,0) 100%);filter:blur(2px)"></div><span class="t seg" style="left:458px;top:275px;letter-spacing:-0.138px;color:#000;">Analyze!</span><div class="abs dcap" style="left:1142px;top:268px;width:103px;height:19px"></div><div class="abs dclose" style="left:1198px;top:269px;width:46px;height:17px"></div><div class="abs" style="left:1170px;top:269px;width:1px;height:17px;background:rgba(255,255,255,.45)"></div><div class="abs" style="left:1197px;top:269px;width:1px;height:17px;background:rgba(255,255,255,.45)"></div><div class="abs" style="left:1151px;top:278px;width:10px;height:3px;background:#f4f4f4;box-shadow:0 0 1px #222"></div><div class="abs" style="left:1179px;top:273px;width:10px;height:8px;border:2px solid #f4f4f4;box-shadow:0 0 1px #222,inset 0 0 1px #222"></div><svg class="abs" style="left:1215px;top:272px" width="11" height="10" viewBox="0 0 11 10"><path d="M1 1L10 9M10 1L1 9" stroke="#fff" stroke-width="2.600"/></svg><div class="abs" style="left:436px;top:296px;width:809px;height:618px;border:1px solid #6f6a78;box-shadow:0 0 0 1px rgba(255,255,255,.5)"></div><div class="abs" style="left:437px;top:297px;width:807px;height:616px;background:#f0f0f0"></div><div class="abs" style="left:445px;top:311px;width:384px;height:162px;border:1px solid #a0a0a0;box-shadow:1px 1px 0 #fff,inset 1px 1px 0 #fff"></div><div class="abs" style="left:452px;top:305px;width:345px;height:13px;background:#f0f0f0"></div><span class="t msb" style="left:455px;top:305px;letter-spacing:-0.086px;color:#0000ff;">Sample List (multi-select) (double-click to see intensity data)</span><div class="abs radio" style="left:454px;top:331px"></div><div class="abs" style="left:458px;top:335px;width:4px;height:4px;border-radius:2px;background:#000"></div><div class="abs" style="left:471px;top:329px;width:60px;height:16px;border:1px dotted #000"></div><span class="t msb" style="left:472.5px;top:330px;letter-spacing:-0.199px;">Standards</span><div class="abs radio" style="left:454px;top:347px"></div><span class="t msb" style="left:472.5px;top:346px;letter-spacing:-0.223px;">Unknowns</span><div class="abs radio" style="left:454px;top:363px"></div><span class="t msb" style="left:472.5px;top:362px;letter-spacing:0.066px;">Wavescans</span><div class="abs radio" style="left:454px;top:379px"></div><span class="t msb" style="left:472.5px;top:378px;letter-spacing:-0.336px;">All Samples</span><div class="abs" style="left:453px;top:393px;width:89px;height:16px;background:#f0f0f0;border:1px solid;border-color:#fff #7c7c7c #7c7c7c #fff;box-shadow:inset -1px -1px 0 #b0b0b0,inset 1px 1px 0 #f6f6f6;"></div><span class="t ms" style="left:497px;top:394px;letter-spacing:-0.564px;transform:translateX(-50%);">Select All</span><div class="abs" style="left:453px;top:410px;width:89px;height:31px;background:#ffff80;border:1px solid;border-color:#fff #7c7c7c #7c7c7c #fff;box-shadow:inset -1px -1px 0 #b4b45a,inset 1px 1px 0 #ffffb0;"></div><span class="t msb" style="left:495px;top:412px;letter-spacing:0.102px;transform:translateX(-50%);">Add To</span><span class="t msb" style="left:497px;top:425px;letter-spacing:-0.185px;transform:translateX(-50%);">Setups</span><div class="abs" style="left:453px;top:442px;width:89px;height:24px;background:#f0f0f0;border:1px solid;border-color:#fff #7c7c7c #7c7c7c #fff;box-shadow:inset -1px -1px 0 #b0b0b0,inset 1px 1px 0 #f6f6f6;"></div><span class="t ms" style="left:497px;top:447px;letter-spacing:-0.671px;transform:translateX(-50%);">Save Setups</span><div class="abs" style="left:549px;top:329px;width:272px;height:133px;background:#fff;border:1px solid;border-color:#696969 #fff #fff #696969"></div><div class="abs" style="left:550px;top:330px;width:270px;height:131px;border:1px solid;border-color:#a0a0a0 #e3e3e3 #e3e3e3 #a0a0a0"></div><span class="t ms" style="left:553px;top:331px;letter-spacing:-0.562px;color:#000;">St</span><span class="t ms" style="left:572.5px;top:331px;letter-spacing:-0.573px;color:#000;">22</span><span class="t ms" style="left:587.5px;top:331px;letter-spacing:-0.806px;color:#000;">Set</span><span class="t ms" style="left:612px;top:331px;color:#000;">2</span><span class="t ms" style="left:621.5px;top:331px;letter-spacing:-0.611px;color:#000;">TiO2 synthetic</span><span class="t ms" style="left:553px;top:344px;letter-spacing:-0.562px;color:#000;">St</span><span class="t ms" style="left:569.5px;top:344px;letter-spacing:-0.812px;color:#000;">140</span><span class="t ms" style="left:590.5px;top:344px;letter-spacing:-0.806px;color:#000;">Set</span><span class="t ms" style="left:615.5px;top:344px;color:#000;">2</span><span class="t ms" style="left:624.5px;top:344px;letter-spacing:-0.635px;color:#000;">Rhodocrosite (Harvard #89794)</span><div class="abs" style="left:551px;top:357px;width:252px;height:13px;background:#3399ff"></div><span class="t ms" style="left:553px;top:357px;letter-spacing:-0.562px;color:#fff;">St</span><span class="t ms" style="left:569.5px;top:357px;letter-spacing:-0.812px;color:#fff;">336</span><span class="t ms" style="left:590.5px;top:357px;letter-spacing:-0.806px;color:#fff;">Set</span><span class="t ms" style="left:615.5px;top:357px;color:#fff;">2</span><span class="t ms" style="left:624.5px;top:357px;letter-spacing:-0.670px;color:#fff;">Nepheline (partial anal.)</span><div class="abs" style="left:551px;top:370px;width:252px;height:13px;background:#3399ff"></div><span class="t ms" style="left:553px;top:370px;letter-spacing:-0.562px;color:#fff;">St</span><span class="t ms" style="left:569.5px;top:370px;letter-spacing:-0.812px;color:#fff;">395</span><span class="t ms" style="left:590.5px;top:370px;letter-spacing:-0.806px;color:#fff;">Set</span><span class="t ms" style="left:615.5px;top:370px;color:#fff;">2</span><span class="t ms" style="left:624.5px;top:370px;letter-spacing:-0.603px;color:#fff;">Magnetite U.C. #3380</span><div class="abs" style="left:551px;top:383px;width:252px;height:13px;background:#3399ff"></div><span class="t ms" style="left:553px;top:383px;letter-spacing:-0.562px;color:#fff;">St</span><span class="t ms" style="left:572.5px;top:383px;letter-spacing:-0.573px;color:#fff;">14</span><span class="t ms" style="left:587.5px;top:383px;letter-spacing:-0.806px;color:#fff;">Set</span><span class="t ms" style="left:612px;top:383px;color:#fff;">1</span><span class="t ms" style="left:621.5px;top:383px;letter-spacing:-0.694px;color:#fff;">SiO2 synthetic</span><div class="abs" style="left:551px;top:396px;width:252px;height:13px;background:#3399ff"></div><span class="t ms" style="left:553px;top:396px;letter-spacing:-0.562px;color:#fff;">St</span><span class="t ms" style="left:569.5px;top:396px;letter-spacing:-0.812px;color:#fff;">358</span><span class="t ms" style="left:590.5px;top:396px;letter-spacing:-0.806px;color:#fff;">Set</span><span class="t ms" style="left:615.5px;top:396px;color:#fff;">1</span><span class="t ms" style="left:624.5px;top:396px;letter-spacing:-0.946px;color:#fff;">Diopside (Chesterman)</span><span class="t ms" style="left:553px;top:409px;letter-spacing:-0.562px;color:#000;">St</span><span class="t ms" style="left:572.5px;top:409px;letter-spacing:-0.573px;color:#000;">14</span><span class="t ms" style="left:587.5px;top:409px;letter-spacing:-0.806px;color:#000;">Set</span><span class="t ms" style="left:612px;top:409px;color:#000;">2</span><span class="t ms" style="left:621.5px;top:409px;letter-spacing:-0.694px;color:#000;">SiO2 synthetic</span><span class="t ms" style="left:553px;top:422px;letter-spacing:-0.562px;color:#000;">St</span><span class="t ms" style="left:569.5px;top:422px;letter-spacing:-0.812px;color:#000;">358</span><span class="t ms" style="left:590.5px;top:422px;letter-spacing:-0.806px;color:#000;">Set</span><span class="t ms" style="left:615.5px;top:422px;color:#000;">2</span><span class="t ms" style="left:624.5px;top:422px;letter-spacing:-0.946px;color:#000;">Diopside (Chesterman)</span><span class="t ms" style="left:553px;top:435px;letter-spacing:-0.562px;color:#000;">St</span><span class="t ms" style="left:572.5px;top:435px;letter-spacing:-0.573px;color:#000;">14</span><span class="t ms" style="left:587.5px;top:435px;letter-spacing:-0.806px;color:#000;">Set</span><span class="t ms" style="left:612px;top:435px;color:#000;">3</span><span class="t ms" style="left:621.5px;top:435px;letter-spacing:-0.694px;color:#000;">SiO2 synthetic</span><span class="t ms" style="left:553px;top:448px;letter-spacing:-0.562px;color:#000;">St</span><span class="t ms" style="left:569.5px;top:448px;letter-spacing:-0.812px;color:#000;">358</span><span class="t ms" style="left:590.5px;top:448px;letter-spacing:-0.806px;color:#000;">Set</span><span class="t ms" style="left:615.5px;top:448px;color:#000;">3</span><span class="t ms" style="left:624.5px;top:448px;letter-spacing:-0.946px;color:#000;">Diopside (Chesterman)</span><div class="abs" style="left:803px;top:331px;width:16px;height:129px;background:#f4f4f4;border-left:1px solid #e8e8e8"></div><svg class="abs" style="left:809px;top:337px" width="7" height="5" viewBox="0 0 7 5"><path d="M0 4.500L3.500 .5L7 4.500z" fill="#505050"/></svg><div class="abs" style="left:804px;top:385px;width:15px;height:13px;background:linear-gradient(90deg,#f4f4f4,#d8d8d8);border:1px solid #8e8e8e;border-radius:2px"></div><div class="abs" style="left:838px;top:306px;width:95px;height:39px;background:#ffff80;border:1px solid;border-color:#fff #7c7c7c #7c7c7c #fff;box-shadow:inset -1px -1px 0 #b4b45a,inset 1px 1px 0 #ffffb0;"></div><span class="t msb" style="left:885px;top:319px;letter-spacing:-0.209px;transform:translateX(-50%);">Analyze</span><div class="abs" style="left:934px;top:306px;width:79px;height:39px;background:#f0f0f0;border:1px solid;border-color:#fff #7c7c7c #7c7c7c #fff;box-shadow:inset -1px -1px 0 #b0b0b0,inset 1px 1px 0 #f6f6f6;"></div><span class="t msb" style="left:973px;top:318px;letter-spacing:0.129px;transform:translateX(-50%);">Raw Data</span><div class="abs" style="left:1014px;top:306px;width:55px;height:22px;background:#f0f0f0;border:1px solid;border-color:#fff #7c7c7c #7c7c7c #fff;box-shadow:inset -1px -1px 0 #b0b0b0,inset 1px 1px 0 #f6f6f6;"></div><span class="t ms" style="left:1041px;top:310px;letter-spacing:-0.892px;transform:translateX(-50%);color:#a0a0a0;text-shadow:1px 1px 0 #fff;">KRaws</span><div class="abs" style="left:1014px;top:330px;width:55px;height:15px;background:#f0f0f0;border:1px solid;border-color:#fff #7c7c7c #7c7c7c #fff;box-shadow:inset -1px -1px 0 #b0b0b0,inset 1px 1px 0 #f6f6f6;"></div><span class="t ms" style="left:1041px;top:330px;letter-spacing:-0.825px;transform:translateX(-50%);color:#a0a0a0;text-shadow:1px 1px 0 #fff;">&gt;&gt;Excel</span><div class="abs" style="left:838px;top:346px;width:95px;height:31px;background:#ffff80;border:1px solid;border-color:#fff #7c7c7c #7c7c7c #fff;box-shadow:inset -1px -1px 0 #b4b45a,inset 1px 1px 0 #ffffb0;"></div><span class="t msb" style="left:883px;top:349px;letter-spacing:-0.135px;transform:translateX(-50%);">List Standard</span><span class="t msb" style="left:885px;top:362px;letter-spacing:-0.129px;transform:translateX(-50%);">Intensities</span><div class="abs" style="left:934px;top:346px;width:135px;height:31px;background:#ffff80;border:1px solid;border-color:#fff #7c7c7c #7c7c7c #fff;box-shadow:inset -1px -1px 0 #b4b45a,inset 1px 1px 0 #ffffb0;"></div><span class="t msb" style="left:1001px;top:355px;letter-spacing:-0.181px;transform:translateX(-50%);">Calculation Options</span><div class="abs" style="left:838px;top:388px;width:13px;height:13px;background:#fff;border:1px solid;border-color:#696969 #e3e3e3 #e3e3e3 #696969;box-shadow:inset 1px 1px 0 #a0a0a0"></div><div class="abs" style="left:861px;top:388px;width:13px;height:13px;background:#fff;border:1px solid;border-color:#696969 #e3e3e3 #e3e3e3 #696969;box-shadow:inset 1px 1px 0 #a0a0a0"></div><span class="t ms" style="left:880px;top:387px;letter-spacing:-0.834px;">Pause Between Samples</span><div class="abs" style="left:1023px;top:379px;width:46px;height:31px;background:#ffff80;border:1px solid;border-color:#fff #7c7c7c #7c7c7c #fff;box-shadow:inset -1px -1px 0 #b4b45a,inset 1px 1px 0 #ffffb0;"></div><span class="t msb" style="left:1045px;top:386px;letter-spacing:-0.122px;transform:translateX(-50%);">Report</span><div class="abs" style="left:1078px;top:306px;width:144px;height:23px;background:#ffff80;border:1px solid;border-color:#fff #7c7c7c #7c7c7c #fff;box-shadow:inset -1px -1px 0 #b4b45a,inset 1px 1px 0 #ffffb0;"></div><span class="t ms" style="left:1150px;top:311px;letter-spacing:-0.812px;transform:translateX(-50%);">Combine Selected Samples</span><div class="abs" style="left:1227px;top:307px;width:13px;height:13px;background:#fff;border:1px solid;border-color:#696969 #e3e3e3 #e3e3e3 #696969;box-shadow:inset 1px 1px 0 #a0a0a0"></div><div class="abs" style="left:1078px;top:330px;width:160px;height:31px;background:#f0f0f0;border:1px solid;border-color:#fff #7c7c7c #7c7c7c #fff;box-shadow:inset -1px -1px 0 #b0b0b0,inset 1px 1px 0 #f6f6f6;"></div><span class="t ms" style="left:1157px;top:332px;letter-spacing:-0.820px;transform:translateX(-50%);">Combine Analysis Lines From</span><span class="t ms" style="left:1157px;top:345px;letter-spacing:-0.757px;transform:translateX(-50%);">Selected Samples</span><div class="abs" style="left:1078px;top:362px;width:160px;height:31px;background:#f0f0f0;border:1px solid;border-color:#fff #7c7c7c #7c7c7c #fff;box-shadow:inset -1px -1px 0 #b0b0b0,inset 1px 1px 0 #f6f6f6;"></div><span class="t ms" style="left:1157px;top:364px;letter-spacing:-0.803px;transform:translateX(-50%);">Combine Data Lines From</span><span class="t ms" style="left:1157px;top:377px;letter-spacing:-0.757px;transform:translateX(-50%);">Selected Samples</span><div class="abs" style="left:445px;top:481px;width:137px;height:25px;background:#ffff80;border:1px solid;border-color:#fff #7c7c7c #7c7c7c #fff;box-shadow:inset -1px -1px 0 #b4b45a,inset 1px 1px 0 #ffffb0;"></div><span class="t msb" style="left:513px;top:487px;letter-spacing:-0.269px;transform:translateX(-50%);">Standard Assignments</span><div class="abs" style="left:589px;top:481px;width:151px;height:25px;background:#f0f0f0;border:1px solid;border-color:#fff #7c7c7c #7c7c7c #fff;box-shadow:inset -1px -1px 0 #b0b0b0,inset 1px 1px 0 #f6f6f6;"></div><span class="t msb" style="left:594px;top:486px;letter-spacing:-0.200px;">Specified Concentrations</span><div class="abs" style="left:445px;top:513px;width:280px;height:41px;background:#f3f6fb;border:1px solid;border-color:#696969 #fff #fff #696969;box-shadow:inset 1px 1px 0 #a0a0a0"></div><div class="abs" style="left:708px;top:515px;width:16px;height:38px;background:#f0f0f0"></div><svg class="abs" style="left:713px;top:521px" width="7" height="5" viewBox="0 0 7 5"><path d="M0 4.500L3.500 .5L7 4.500z" fill="#a0a0a0"/></svg><svg class="abs" style="left:713px;top:541px" width="7" height="5" viewBox="0 0 7 5"><path d="M0 .5L3.500 4.500L7 .5z" fill="#a0a0a0"/></svg><div class="abs" style="left:439px;top:570px;width:804px;height:151px;background:#fff;border:1px solid;border-color:#696969 #fff #fff #696969;"></div><div class="abs" style="left:440px;top:571px;width:802px;height:149px;border:1px solid;border-color:#a0a0a0 #e3e3e3 #e3e3e3 #a0a0a0;"></div><div class="abs" style="left:441px;top:572px;width:800px;height:15px;background:#f0f0f0"></div><div class="abs" style="left:441px;top:572px;width:71px;height:129px;background:#f0f0f0"></div><div class="abs" style="left:441px;top:587px;width:800px;height:1px;background:#000"></div><div class="abs" style="left:512px;top:572px;width:1px;height:16px;background:#000"></div><div class="abs" style="left:513px;top:572px;width:1px;height:16px;background:#fff"></div><div class="abs" style="left:585px;top:588px;width:1px;height:114px;background:#c0c0c0"></div><div class="abs" style="left:585px;top:572px;width:1px;height:16px;background:#000"></div><div class="abs" style="left:586px;top:572px;width:1px;height:16px;background:#fff"></div><div class="abs" style="left:658px;top:588px;width:1px;height:114px;background:#c0c0c0"></div><div class="abs" style="left:658px;top:572px;width:1px;height:16px;background:#000"></div><div class="abs" style="left:659px;top:572px;width:1px;height:16px;background:#fff"></div><div class="abs" style="left:731px;top:588px;width:1px;height:114px;background:#c0c0c0"></div><div class="abs" style="left:731px;top:572px;width:1px;height:16px;background:#000"></div><div class="abs" style="left:732px;top:572px;width:1px;height:16px;background:#fff"></div><div class="abs" style="left:804px;top:588px;width:1px;height:114px;background:#c0c0c0"></div><div class="abs" style="left:804px;top:572px;width:1px;height:16px;background:#000"></div><div class="abs" style="left:805px;top:572px;width:1px;height:16px;background:#fff"></div><div class="abs" style="left:877px;top:588px;width:1px;height:114px;background:#c0c0c0"></div><div class="abs" style="left:877px;top:572px;width:1px;height:16px;background:#000"></div><div class="abs" style="left:878px;top:572px;width:1px;height:16px;background:#fff"></div><div class="abs" style="left:950px;top:588px;width:1px;height:114px;background:#c0c0c0"></div><div class="abs" style="left:950px;top:572px;width:1px;height:16px;background:#000"></div><div class="abs" style="left:951px;top:572px;width:1px;height:16px;background:#fff"></div><div class="abs" style="left:1023px;top:588px;width:1px;height:114px;background:#c0c0c0"></div><div class="abs" style="left:1023px;top:572px;width:1px;height:16px;background:#000"></div><div class="abs" style="left:1024px;top:572px;width:1px;height:16px;background:#fff"></div><div class="abs" style="left:1096px;top:588px;width:1px;height:114px;background:#c0c0c0"></div><div class="abs" style="left:1096px;top:572px;width:1px;height:16px;background:#000"></div><div class="abs" style="left:1097px;top:572px;width:1px;height:16px;background:#fff"></div><div class="abs" style="left:1169px;top:588px;width:1px;height:114px;background:#c0c0c0"></div><div class="abs" style="left:1169px;top:572px;width:1px;height:16px;background:#000"></div><div class="abs" style="left:1170px;top:572px;width:1px;height:16px;background:#fff"></div><div class="abs" style="left:513px;top:603px;width:728px;height:1px;background:#c0c0c0"></div><div class="abs" style="left:441px;top:603px;width:71px;height:1px;background:#000"></div><div class="abs" style="left:441px;top:604px;width:71px;height:1px;background:#fff"></div><div class="abs" style="left:513px;top:619px;width:728px;height:1px;background:#c0c0c0"></div><div class="abs" style="left:441px;top:619px;width:71px;height:1px;background:#000"></div><div class="abs" style="left:441px;top:620px;width:71px;height:1px;background:#fff"></div><div class="abs" style="left:513px;top:635px;width:728px;height:1px;background:#c0c0c0"></div><div class="abs" style="left:441px;top:635px;width:71px;height:1px;background:#000"></div><div class="abs" style="left:441px;top:636px;width:71px;height:1px;background:#fff"></div><div class="abs" style="left:513px;top:651px;width:728px;height:1px;background:#c0c0c0"></div><div class="abs" style="left:441px;top:651px;width:71px;height:1px;background:#000"></div><div class="abs" style="left:441px;top:652px;width:71px;height:1px;background:#fff"></div><div class="abs" style="left:513px;top:667px;width:728px;height:1px;background:#c0c0c0"></div><div class="abs" style="left:441px;top:667px;width:71px;height:1px;background:#000"></div><div class="abs" style="left:441px;top:668px;width:71px;height:1px;background:#fff"></div><div class="abs" style="left:513px;top:683px;width:728px;height:1px;background:#c0c0c0"></div><div class="abs" style="left:441px;top:683px;width:71px;height:1px;background:#000"></div><div class="abs" style="left:441px;top:684px;width:71px;height:1px;background:#fff"></div><div class="abs" style="left:513px;top:699px;width:728px;height:1px;background:#c0c0c0"></div><div class="abs" style="left:441px;top:699px;width:71px;height:1px;background:#000"></div><div class="abs" style="left:512px;top:587px;width:1px;height:115px;background:#000"></div><div class="abs" style="left:441px;top:588px;width:71px;height:1px;background:#fff"></div><div class="abs" style="left:440px;top:702px;width:801px;height:17px;background:#f7f7f7;background-image:repeating-conic-gradient(#f0f0f0 0 25%,#fff 0 50%);background-size:2px 2px"></div><div class="abs" style="left:440px;top:702px;width:17px;height:17px;background:#f0f0f0;border:1px solid;border-color:#fff #7c7c7c #7c7c7c #fff;box-shadow:inset -1px -1px 0 #b0b0b0,inset 1px 1px 0 #f6f6f6;"></div><svg class="abs" style="left:445px;top:706px" width="5" height="9" viewBox="0 0 5 9"><path d="M5 0L0 4.500L5 9z" fill="#000"/></svg><div class="abs" style="left:457px;top:702px;width:17px;height:17px;background:#f0f0f0;border:1px solid;border-color:#fff #7c7c7c #7c7c7c #fff;box-shadow:inset -1px -1px 0 #b0b0b0,inset 1px 1px 0 #f6f6f6;"></div><div class="abs" style="left:1224px;top:702px;width:17px;height:17px;background:#f0f0f0;border:1px solid;border-color:#fff #7c7c7c #7c7c7c #fff;box-shadow:inset -1px -1px 0 #b0b0b0,inset 1px 1px 0 #f6f6f6;"></div><svg class="abs" style="left:1230px;top:706px" width="5" height="9" viewBox="0 0 5 9"><path d="M0 0L5 4.500L0 9z" fill="#000"/></svg><div class="abs" style="left:438px;top:570px;width:40px;height:16px;background:#ffff80;border:1px solid;border-color:#fff #7c7c7c #7c7c7c #fff;box-shadow:inset -1px -1px 0 #b4b45a,inset 1px 1px 0 #ffffb0;"></div><span class="t ms" style="left:445px;top:571px;letter-spacing:-0.862px;">Copy</span><div class="abs" style="left:445px;top:729px;width:201px;height:25px;background:#f0f0f0;border:1px solid;border-color:#fff #7c7c7c #7c7c7c #fff;box-shadow:inset -1px -1px 0 #b0b0b0,inset 1px 1px 0 #f6f6f6;"></div><span class="t msb" style="left:545px;top:734px;letter-spacing:0.041px;transform:translateX(-50%);">Disable Selected Line(s)</span><div class="abs" style="left:653px;top:729px;width:209px;height:25px;background:#f0f0f0;border:1px solid;border-color:#fff #7c7c7c #7c7c7c #fff;box-shadow:inset -1px -1px 0 #b0b0b0,inset 1px 1px 0 #f6f6f6;"></div><span class="t msb" style="left:757px;top:734px;letter-spacing:0.057px;transform:translateX(-50%);">Enable Selected Line(s)</span><div class="abs" style="left:869px;top:729px;width:201px;height:25px;background:#f0f0f0;border:1px solid;border-color:#fff #7c7c7c #7c7c7c #fff;box-shadow:inset -1px -1px 0 #b0b0b0,inset 1px 1px 0 #f6f6f6;"></div><span class="t ms" style="left:969px;top:734px;letter-spacing:-0.670px;transform:translateX(-50%);">Analyze Selected Line(s)</span><div class="abs" style="left:439px;top:762px;width:804px;height:132px;background:#fff;border:1px solid;border-color:#696969 #fff #fff #696969;"></div><div class="abs" style="left:440px;top:763px;width:802px;height:130px;border:1px solid;border-color:#a0a0a0 #e3e3e3 #e3e3e3 #a0a0a0;"></div><div class="abs" style="left:441px;top:764px;width:783px;height:15px;background:#f0f0f0"></div><div class="abs" style="left:441px;top:764px;width:71px;height:111px;background:#f0f0f0"></div><div class="abs" style="left:441px;top:779px;width:783px;height:1px;background:#000"></div><div class="abs" style="left:512px;top:764px;width:1px;height:16px;background:#000"></div><div class="abs" style="left:513px;top:764px;width:1px;height:16px;background:#fff"></div><div class="abs" style="left:585px;top:780px;width:1px;height:96px;background:#c0c0c0"></div><div class="abs" style="left:585px;top:764px;width:1px;height:16px;background:#000"></div><div class="abs" style="left:586px;top:764px;width:1px;height:16px;background:#fff"></div><div class="abs" style="left:658px;top:780px;width:1px;height:96px;background:#c0c0c0"></div><div class="abs" style="left:658px;top:764px;width:1px;height:16px;background:#000"></div><div class="abs" style="left:659px;top:764px;width:1px;height:16px;background:#fff"></div><div class="abs" style="left:731px;top:780px;width:1px;height:96px;background:#c0c0c0"></div><div class="abs" style="left:731px;top:764px;width:1px;height:16px;background:#000"></div><div class="abs" style="left:732px;top:764px;width:1px;height:16px;background:#fff"></div><div class="abs" style="left:804px;top:780px;width:1px;height:96px;background:#c0c0c0"></div><div class="abs" style="left:804px;top:764px;width:1px;height:16px;background:#000"></div><div class="abs" style="left:805px;top:764px;width:1px;height:16px;background:#fff"></div><div class="abs" style="left:877px;top:780px;width:1px;height:96px;background:#c0c0c0"></div><div class="abs" style="left:877px;top:764px;width:1px;height:16px;background:#000"></div><div class="abs" style="left:878px;top:764px;width:1px;height:16px;background:#fff"></div><div class="abs" style="left:950px;top:780px;width:1px;height:96px;background:#c0c0c0"></div><div class="abs" style="left:950px;top:764px;width:1px;height:16px;background:#000"></div><div class="abs" style="left:951px;top:764px;width:1px;height:16px;background:#fff"></div><div class="abs" style="left:1023px;top:780px;width:1px;height:96px;background:#c0c0c0"></div><div class="abs" style="left:1023px;top:764px;width:1px;height:16px;background:#000"></div><div class="abs" style="left:1024px;top:764px;width:1px;height:16px;background:#fff"></div><div class="abs" style="left:1096px;top:780px;width:1px;height:96px;background:#c0c0c0"></div><div class="abs" style="left:1096px;top:764px;width:1px;height:16px;background:#000"></div><div class="abs" style="left:1097px;top:764px;width:1px;height:16px;background:#fff"></div><div class="abs" style="left:1169px;top:780px;width:1px;height:96px;background:#c0c0c0"></div><div class="abs" style="left:1169px;top:764px;width:1px;height:16px;background:#000"></div><div class="abs" style="left:1170px;top:764px;width:1px;height:16px;background:#fff"></div><div class="abs" style="left:513px;top:795px;width:711px;height:1px;background:#c0c0c0"></div><div class="abs" style="left:441px;top:795px;width:71px;height:1px;background:#000"></div><div class="abs" style="left:441px;top:796px;width:71px;height:1px;background:#fff"></div><div class="abs" style="left:513px;top:811px;width:711px;height:1px;background:#c0c0c0"></div><div class="abs" style="left:441px;top:811px;width:71px;height:1px;background:#000"></div><div class="abs" style="left:441px;top:812px;width:71px;height:1px;background:#fff"></div><div class="abs" style="left:513px;top:827px;width:711px;height:1px;background:#c0c0c0"></div><div class="abs" style="left:441px;top:827px;width:71px;height:1px;background:#000"></div><div class="abs" style="left:441px;top:828px;width:71px;height:1px;background:#fff"></div><div class="abs" style="left:513px;top:843px;width:711px;height:1px;background:#c0c0c0"></div><div class="abs" style="left:441px;top:843px;width:71px;height:1px;background:#000"></div><div class="abs" style="left:441px;top:844px;width:71px;height:1px;background:#fff"></div><div class="abs" style="left:513px;top:859px;width:711px;height:1px;background:#c0c0c0"></div><div class="abs" style="left:441px;top:859px;width:71px;height:1px;background:#000"></div><div class="abs" style="left:441px;top:860px;width:71px;height:1px;background:#fff"></div><div class="abs" style="left:513px;top:875px;width:711px;height:1px;background:#c0c0c0"></div><div class="abs" style="left:441px;top:875px;width:71px;height:1px;background:#000"></div><div class="abs" style="left:512px;top:779px;width:1px;height:97px;background:#000"></div><div class="abs" style="left:441px;top:780px;width:71px;height:1px;background:#fff"></div><div class="abs" style="left:440px;top:876px;width:784px;height:17px;background:#f7f7f7;background-image:repeating-conic-gradient(#f0f0f0 0 25%,#fff 0 50%);background-size:2px 2px"></div><div class="abs" style="left:440px;top:876px;width:17px;height:17px;background:#f0f0f0;border:1px solid;border-color:#fff #7c7c7c #7c7c7c #fff;box-shadow:inset -1px -1px 0 #b0b0b0,inset 1px 1px 0 #f6f6f6;"></div><svg class="abs" style="left:445px;top:880px" width="5" height="9" viewBox="0 0 5 9"><path d="M5 0L0 4.500L5 9z" fill="#000"/></svg><div class="abs" style="left:457px;top:876px;width:17px;height:17px;background:#f0f0f0;border:1px solid;border-color:#fff #7c7c7c #7c7c7c #fff;box-shadow:inset -1px -1px 0 #b0b0b0,inset 1px 1px 0 #f6f6f6;"></div><div class="abs" style="left:1207px;top:876px;width:17px;height:17px;background:#f0f0f0;border:1px solid;border-color:#fff #7c7c7c #7c7c7c #fff;box-shadow:inset -1px -1px 0 #b0b0b0,inset 1px 1px 0 #f6f6f6;"></div><svg class="abs" style="left:1213px;top:880px" width="5" height="9" viewBox="0 0 5 9"><path d="M0 0L5 4.500L0 9z" fill="#000"/></svg><div class="abs" style="left:1224px;top:876px;width:17px;height:17px;background:#f0f0f0"></div><div class="abs" style="left:1224px;top:764px;width:17px;height:112px;background:#f7f7f7;background-image:repeating-conic-gradient(#f0f0f0 0 25%,#fff 0 50%);background-size:2px 2px"></div><div class="abs" style="left:1224px;top:764px;width:17px;height:17px;background:#f0f0f0;border:1px solid;border-color:#fff #7c7c7c #7c7c7c #fff;box-shadow:inset -1px -1px 0 #b0b0b0,inset 1px 1px 0 #f6f6f6;"></div><svg class="abs" style="left:1228px;top:770px" width="9" height="5" viewBox="0 0 9 5"><path d="M0 5L4.500 0L9 5z" fill="#000"/></svg><div class="abs" style="left:1224px;top:781px;width:17px;height:17px;background:#f0f0f0;border:1px solid;border-color:#fff #7c7c7c #7c7c7c #fff;box-shadow:inset -1px -1px 0 #b0b0b0,inset 1px 1px 0 #f6f6f6;"></div><div class="abs" style="left:1224px;top:859px;width:17px;height:17px;background:#f0f0f0;border:1px solid;border-color:#fff #7c7c7c #7c7c7c #fff;box-shadow:inset -1px -1px 0 #b0b0b0,inset 1px 1px 0 #f6f6f6;"></div><svg class="abs" style="left:1228px;top:865px" width="9" height="5" viewBox="0 0 9 5"><path d="M0 0L4.500 5L9 0z" fill="#000"/></svg><div class="abs" style="left:438px;top:762px;width:40px;height:16px;background:#ffff80;border:1px solid;border-color:#fff #7c7c7c #7c7c7c #fff;box-shadow:inset -1px -1px 0 #b4b45a,inset 1px 1px 0 #ffffb0;"></div><span class="t ms" style="left:445px;top:763px;letter-spacing:-0.862px;">Copy</span><div class="abs" style="left:437px;top:898px;width:807px;height:1px;background:#a0a0a0"></div><div class="abs" style="left:437px;top:899px;width:807px;height:1px;background:#fff"></div><div class="abs" style="left:437px;top:900px;width:652px;height:13px;border:1px solid;border-color:#a0a0a0 #fff #fff #a0a0a0"></div><div class="abs" style="left:1091px;top:900px;width:66px;height:13px;border:1px solid;border-color:#a0a0a0 #fff #fff #a0a0a0"></div><div class="abs" style="left:1159px;top:900px;width:66px;height:13px;border:1px solid;border-color:#a0a0a0 #fff #fff #a0a0a0"></div><span class="t msb" style="left:1124px;top:899px;letter-spacing:0.116px;transform:translateX(-50%);">Cancel</span><span class="t msb" style="left:1192px;top:899px;letter-spacing:-0.004px;transform:translateX(-50%);color:#a0a0a0;text-shadow:1px 1px 0 #fff;">Next</span><svg class="abs" style="left:1232px;top:901px" width="12" height="12" viewBox="0 0 12 12"><path d="M11 1L1 11M11 5L5 11M11 9L9 11" stroke="#a0a0a0" stroke-width="1"/><path d="M12 2L2 12M12 6L6 12M12 10L10 12" stroke="#fff" stroke-width="1"/></svg><div class="abs" style="left:725px;top:392px;width:615px;height:222px;background:#f0f0f0;border:1px solid #979797;box-shadow:3px 3px 4px rgba(0,0,0,.45)"></div><div class="abs" style="left:754px;top:394px;width:1px;height:218px;background:#e2e3e3"></div><div class="abs" style="left:755px;top:394px;width:1px;height:218px;background:#fff"></div><div class="abs" style="left:756px;top:525px;width:580px;height:1px;background:#e0e0e0"></div><div class="abs" style="left:756px;top:526px;width:580px;height:1px;background:#fff"></div><div class="abs" style="left:756px;top:555px;width:580px;height:1px;background:#e0e0e0"></div><div class="abs" style="left:756px;top:556px;width:580px;height:1px;background:#fff"></div><div class="abs" style="left:756px;top:585px;width:580px;height:1px;background:#e0e0e0"></div><div class="abs" style="left:756px;top:586px;width:580px;height:1px;background:#fff"></div><span class="t seg" style="left:760px;top:399px;letter-spacing:-0.118px;">Export Selected Samples To Custom Analysis Format #6 (H.W.), (Calculated and statistical results with sample</span><span class="t seg" style="left:760px;top:421px;letter-spacing:-0.117px;">Export Selected Samples To Custom Analysis Format #9 (P.C.), (Calculated and statistical results with formulas</span><span class="t seg" style="left:760px;top:451px;letter-spacing:-0.108px;">Export Selected Samples To User Specified Format Output (Output only the data types specified by the user)</span><span class="t seg" style="left:760px;top:481px;letter-spacing:0.030px;">Output Automatic Traverse Plots</span><span class="t seg" style="left:760px;top:503px;letter-spacing:0.129px;">Output Automatic Ternary Plots</span><span class="t seg" style="left:760px;top:533px;letter-spacing:-0.233px;">Display Alpha Factors For Selected Sample</span><span class="t seg" style="left:760px;top:563px;letter-spacing:-0.138px;">Export Selected Samples To Custom.MDB (for CalcImage phase match feature)</span><span class="t seg" style="left:760px;top:593px;letter-spacing:-0.159px;">Export Selected Samples To CalcZAF Analysis Format (for CalcZAF import)</span><div class="abs" style="left:751px;top:444px;width:584px;height:29px;border:2px solid #f0146e;border-radius:1px"></div>
</body></html>
